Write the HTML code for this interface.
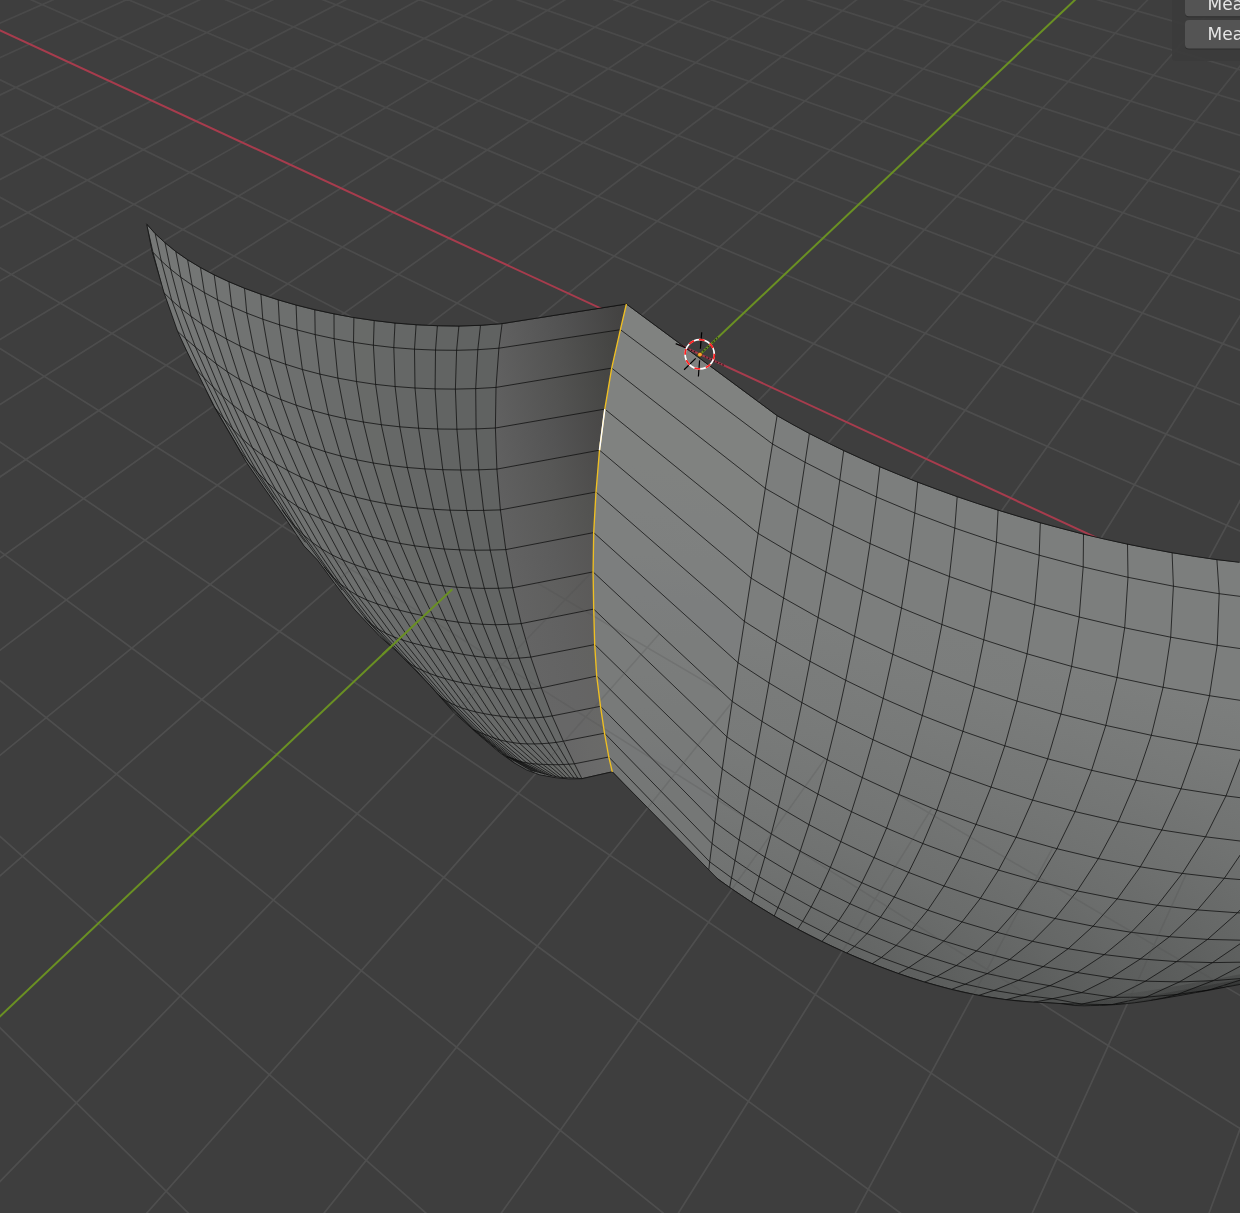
<!DOCTYPE html><html><head><meta charset="utf-8"><title>Blender viewport</title><style>html,body{margin:0;padding:0;background:#3e3e3e;}body{width:1240px;height:1213px;overflow:hidden;position:relative;font-family:"DejaVu Sans","Liberation Sans",sans-serif}svg{display:block}</style></head><body><svg width="1240" height="1213" viewBox="0 0 1240 1213">
<defs><linearGradient id="fade" x1="0" y1="0" x2="0" y2="1"><stop offset="0" stop-color="#3e3e3e" stop-opacity="0.3"/><stop offset="0.45" stop-color="#3e3e3e" stop-opacity="0"/></linearGradient><clipPath id="cl"><polygon points="146.4,223.7 155.1,233.5 165,242.7 175.8,251.5 187.6,259.7 200.5,267.5 214.2,274.8 228.9,281.7 244.5,288.2 260.9,294.2 278.2,299.8 296.1,305 314.8,309.7 334,313.8 353.9,317.5 374.2,320.5 395,323 416.1,324.7 437.4,325.7 458.9,326 480.5,325.3 502.1,323.6 626.4,304 620.4,329.7 611.7,368.1 604.8,409.1 599.5,450.2 596,492 593.7,532.6 593.1,571.9 593.7,609.1 594.7,644.6 596.7,676 600.5,706.3 604.5,733.2 608.8,757 612.3,771.8 581.9,778.7 568.7,778.9 555.8,777.7 539.7,774.8 526.8,770 513.9,762.7 499.4,752.3 478.4,734.5 454.2,712.7 430,685.5 412.3,667.1 396.1,651 380,636.5 355,610 335,583.8 317.5,560 304.1,546 283.1,514.8 263.7,487.3 245.9,461.5 228.2,430.8 213.6,405.7 199.9,377.5 186.2,350 177.5,331 163.9,292.2 152.1,251.3 146.8,224.7"/></clipPath><clipPath id="cr"><polygon points="626.4,304 777.1,415.6 793,424.7 809.4,433.5 826.3,442.1 843.7,450.5 861.5,458.7 879.8,466.7 898.5,474.5 917.7,482.1 937.2,489.4 957.2,496.6 977.4,503.5 998.1,510.1 1019,516.5 1040.3,522.7 1061.8,528.5 1083.5,534.1 1105.4,539.3 1127.5,544.1 1149.7,548.6 1172.1,552.7 1194.5,556.4 1216.9,559.6 1239.2,562.3 1262,562.3 1262,982.2 1252.5,982.2 1239.1,984.6 1228.9,986.5 1215.7,989 1205.7,990.9 1195.7,992.6 1182.8,995 1173,996.7 1163.2,998.4 1153.6,1000 1143.9,1001.5 1134.3,1002.8 1124.8,1003.8 1115.3,1004.6 1108.8,1005 1099.5,1005.4 1090.3,1005.6 1084.1,1005.8 1075.1,1005.5 1073.8,1005.3 1060,1003.5 1046.2,1002.7 1032.4,1002.1 1018.6,1001 1004.8,999.5 991.1,997.5 977.4,995.1 963.7,992.3 950.2,989.1 936.7,985.5 923.3,981.7 910,977.5 896.9,973 883.8,968.2 870.9,963.2 858.1,958 845.5,952.5 833,946.8 820.7,940.9 808.5,934.8 796.5,928.5 784.7,922 773.1,915.3 761.7,908.4 750.4,901.4 739.4,894.1 728.6,886.7 717.9,879.1 612.3,771.8 608.8,757 604.5,733.2 600.5,706.3 596.7,676 594.7,644.6 593.7,609.1 593.1,571.9 593.7,532.6 596,492 599.5,450.2 604.8,409.1 611.7,368.1 620.4,329.7"/></clipPath><linearGradient id="bl0" gradientUnits="userSpaceOnUse" x1="500.5" y1="335.9" x2="623.4" y2="316.9"><stop offset="0" stop-color="#606060"/><stop offset="0.55" stop-color="#515151"/><stop offset="1" stop-color="#434241"/></linearGradient><linearGradient id="bl1" gradientUnits="userSpaceOnUse" x1="497.5" y1="367.8" x2="616" y2="348.9"><stop offset="0" stop-color="#606060"/><stop offset="0.55" stop-color="#525251"/><stop offset="1" stop-color="#444442"/></linearGradient><linearGradient id="bl2" gradientUnits="userSpaceOnUse" x1="495.7" y1="407.7" x2="608.2" y2="388.6"><stop offset="0" stop-color="#606060"/><stop offset="0.55" stop-color="#535352"/><stop offset="1" stop-color="#464644"/></linearGradient><linearGradient id="bl3" gradientUnits="userSpaceOnUse" x1="496.1" y1="448.6" x2="602.1" y2="429.6"><stop offset="0" stop-color="#606060"/><stop offset="0.55" stop-color="#545454"/><stop offset="1" stop-color="#494847"/></linearGradient><linearGradient id="bl4" gradientUnits="userSpaceOnUse" x1="498.6" y1="489.5" x2="597.8" y2="471.1"><stop offset="0" stop-color="#606060"/><stop offset="0.55" stop-color="#575756"/><stop offset="1" stop-color="#4d4c4b"/></linearGradient><linearGradient id="bl5" gradientUnits="userSpaceOnUse" x1="503.1" y1="529.7" x2="594.9" y2="512.3"><stop offset="0" stop-color="#616161"/><stop offset="0.55" stop-color="#5a5a59"/><stop offset="1" stop-color="#525250"/></linearGradient><linearGradient id="bl6" gradientUnits="userSpaceOnUse" x1="509.3" y1="568.6" x2="593.4" y2="552.2"><stop offset="0" stop-color="#626262"/><stop offset="0.55" stop-color="#5c5c5c"/><stop offset="1" stop-color="#575655"/></linearGradient><linearGradient id="bl7" gradientUnits="userSpaceOnUse" x1="517" y1="605.6" x2="593.4" y2="590.5"><stop offset="0" stop-color="#636363"/><stop offset="0.55" stop-color="#5f5f5e"/><stop offset="1" stop-color="#5b5a59"/></linearGradient><linearGradient id="bl8" gradientUnits="userSpaceOnUse" x1="526" y1="640.3" x2="594.2" y2="626.9"><stop offset="0" stop-color="#646464"/><stop offset="0.55" stop-color="#616161"/><stop offset="1" stop-color="#5f5e5d"/></linearGradient><linearGradient id="bl9" gradientUnits="userSpaceOnUse" x1="536" y1="672.5" x2="595.7" y2="660.3"><stop offset="0" stop-color="#656565"/><stop offset="0.55" stop-color="#636363"/><stop offset="1" stop-color="#626260"/></linearGradient><linearGradient id="bl10" gradientUnits="userSpaceOnUse" x1="546.8" y1="701.9" x2="598.6" y2="691.1"><stop offset="0" stop-color="#666666"/><stop offset="0.55" stop-color="#656565"/><stop offset="1" stop-color="#656463"/></linearGradient><linearGradient id="bl11" gradientUnits="userSpaceOnUse" x1="557.8" y1="728.5" x2="602.5" y2="719.8"><stop offset="0" stop-color="#676767"/><stop offset="0.55" stop-color="#676767"/><stop offset="1" stop-color="#686866"/></linearGradient><linearGradient id="bl12" gradientUnits="userSpaceOnUse" x1="568.9" y1="752.5" x2="606.6" y2="745.1"><stop offset="0" stop-color="#676767"/><stop offset="0.55" stop-color="#696968"/><stop offset="1" stop-color="#6a6a68"/></linearGradient><linearGradient id="bl13" gradientUnits="userSpaceOnUse" x1="578.1" y1="771.3" x2="610.5" y2="764.4"><stop offset="0" stop-color="#686868"/><stop offset="0.55" stop-color="#6a6a6a"/><stop offset="1" stop-color="#6c6c6a"/></linearGradient><linearGradient id="b0" gradientUnits="userSpaceOnUse" x1="701.8" y1="359.8" x2="696.4" y2="386.8"><stop offset="0" stop-color="#808280"/><stop offset="1" stop-color="#808280"/></linearGradient><linearGradient id="b1" gradientUnits="userSpaceOnUse" x1="696.4" y1="386.8" x2="688.5" y2="428.2"><stop offset="0" stop-color="#808280"/><stop offset="1" stop-color="#808280"/></linearGradient><linearGradient id="b2" gradientUnits="userSpaceOnUse" x1="688.5" y1="428.2" x2="681.4" y2="471.3"><stop offset="0" stop-color="#808280"/><stop offset="1" stop-color="#808280"/></linearGradient><linearGradient id="b3" gradientUnits="userSpaceOnUse" x1="681.4" y1="471.3" x2="675.3" y2="514.1"><stop offset="0" stop-color="#808280"/><stop offset="1" stop-color="#7f8180"/></linearGradient><linearGradient id="b4" gradientUnits="userSpaceOnUse" x1="675.3" y1="514.1" x2="670.2" y2="556.7"><stop offset="0" stop-color="#7f8180"/><stop offset="1" stop-color="#7e807f"/></linearGradient><linearGradient id="b5" gradientUnits="userSpaceOnUse" x1="670.2" y1="556.7" x2="665.9" y2="597.7"><stop offset="0" stop-color="#7e807f"/><stop offset="1" stop-color="#7c7e7e"/></linearGradient><linearGradient id="b6" gradientUnits="userSpaceOnUse" x1="665.9" y1="597.7" x2="662.7" y2="636.6"><stop offset="0" stop-color="#7c7e7e"/><stop offset="1" stop-color="#7b7d7c"/></linearGradient><linearGradient id="b7" gradientUnits="userSpaceOnUse" x1="662.7" y1="636.6" x2="660.3" y2="673"><stop offset="0" stop-color="#7b7d7c"/><stop offset="1" stop-color="#7a7c7b"/></linearGradient><linearGradient id="b8" gradientUnits="userSpaceOnUse" x1="660.3" y1="673" x2="658.5" y2="706.7"><stop offset="0" stop-color="#7a7c7b"/><stop offset="1" stop-color="#797b7a"/></linearGradient><linearGradient id="b9" gradientUnits="userSpaceOnUse" x1="658.5" y1="706.7" x2="657.5" y2="736.7"><stop offset="0" stop-color="#797b7a"/><stop offset="1" stop-color="#787a79"/></linearGradient><linearGradient id="b10" gradientUnits="userSpaceOnUse" x1="657.5" y1="736.7" x2="657.7" y2="764.2"><stop offset="0" stop-color="#787a79"/><stop offset="1" stop-color="#767878"/></linearGradient><linearGradient id="b11" gradientUnits="userSpaceOnUse" x1="657.7" y1="764.2" x2="658.2" y2="788.4"><stop offset="0" stop-color="#767878"/><stop offset="1" stop-color="#757776"/></linearGradient><linearGradient id="b12" gradientUnits="userSpaceOnUse" x1="658.2" y1="788.4" x2="659.3" y2="809.4"><stop offset="0" stop-color="#757776"/><stop offset="1" stop-color="#747675"/></linearGradient><linearGradient id="b13" gradientUnits="userSpaceOnUse" x1="659.3" y1="809.4" x2="660.4" y2="821.9"><stop offset="0" stop-color="#747675"/><stop offset="1" stop-color="#737574"/></linearGradient><linearGradient id="r14" gradientUnits="userSpaceOnUse" x1="793.3" y1="424.5" x2="788.8" y2="453.1"><stop offset="0" stop-color="#7c7e7d"/><stop offset="1" stop-color="#7c7e7d"/></linearGradient><linearGradient id="r15" gradientUnits="userSpaceOnUse" x1="826.6" y1="442" x2="822.5" y2="471.1"><stop offset="0" stop-color="#7c7e7d"/><stop offset="1" stop-color="#7c7e7d"/></linearGradient><linearGradient id="r16" gradientUnits="userSpaceOnUse" x1="861.8" y1="458.6" x2="858.1" y2="488.4"><stop offset="0" stop-color="#7c7e7d"/><stop offset="1" stop-color="#7c7e7d"/></linearGradient><linearGradient id="r17" gradientUnits="userSpaceOnUse" x1="898.7" y1="474.4" x2="895.6" y2="504.9"><stop offset="0" stop-color="#7c7e7d"/><stop offset="1" stop-color="#7c7e7d"/></linearGradient><linearGradient id="r18" gradientUnits="userSpaceOnUse" x1="937.4" y1="489.3" x2="934.8" y2="520.5"><stop offset="0" stop-color="#7c7e7d"/><stop offset="1" stop-color="#7c7e7d"/></linearGradient><linearGradient id="r19" gradientUnits="userSpaceOnUse" x1="977.6" y1="503.4" x2="975.6" y2="535.1"><stop offset="0" stop-color="#7c7e7d"/><stop offset="1" stop-color="#7c7e7d"/></linearGradient><linearGradient id="r20" gradientUnits="userSpaceOnUse" x1="1019.2" y1="516.4" x2="1017.8" y2="548.7"><stop offset="0" stop-color="#7c7e7d"/><stop offset="1" stop-color="#7c7e7d"/></linearGradient><linearGradient id="r21" gradientUnits="userSpaceOnUse" x1="1061.9" y1="528.4" x2="1061.2" y2="561"><stop offset="0" stop-color="#7c7e7d"/><stop offset="1" stop-color="#7c7e7d"/></linearGradient><linearGradient id="r22" gradientUnits="userSpaceOnUse" x1="1105.5" y1="539.1" x2="1105.6" y2="572.1"><stop offset="0" stop-color="#7c7e7d"/><stop offset="1" stop-color="#7c7e7d"/></linearGradient><linearGradient id="r23" gradientUnits="userSpaceOnUse" x1="1149.8" y1="548.4" x2="1150.7" y2="581.8"><stop offset="0" stop-color="#7c7e7d"/><stop offset="1" stop-color="#7c7e7d"/></linearGradient><linearGradient id="r24" gradientUnits="userSpaceOnUse" x1="1194.5" y1="556.1" x2="1196.3" y2="589.9"><stop offset="0" stop-color="#7c7e7d"/><stop offset="1" stop-color="#7c7e7d"/></linearGradient><linearGradient id="r25" gradientUnits="userSpaceOnUse" x1="1239.2" y1="562" x2="1242" y2="596.6"><stop offset="0" stop-color="#7c7e7d"/><stop offset="1" stop-color="#7c7e7d"/></linearGradient><linearGradient id="r26" gradientUnits="userSpaceOnUse" x1="788.8" y1="453.1" x2="781.8" y2="497.8"><stop offset="0" stop-color="#7c7e7d"/><stop offset="1" stop-color="#7c7e7d"/></linearGradient><linearGradient id="r27" gradientUnits="userSpaceOnUse" x1="822.5" y1="471.1" x2="815.7" y2="516.5"><stop offset="0" stop-color="#7c7e7d"/><stop offset="1" stop-color="#7c7e7d"/></linearGradient><linearGradient id="r28" gradientUnits="userSpaceOnUse" x1="858.1" y1="488.4" x2="851.7" y2="534.7"><stop offset="0" stop-color="#7c7e7d"/><stop offset="1" stop-color="#7c7e7d"/></linearGradient><linearGradient id="r29" gradientUnits="userSpaceOnUse" x1="895.6" y1="504.9" x2="889.5" y2="552.1"><stop offset="0" stop-color="#7c7e7d"/><stop offset="1" stop-color="#7c7e7d"/></linearGradient><linearGradient id="r30" gradientUnits="userSpaceOnUse" x1="934.8" y1="520.5" x2="929.1" y2="568.5"><stop offset="0" stop-color="#7c7e7d"/><stop offset="1" stop-color="#7c7e7d"/></linearGradient><linearGradient id="r31" gradientUnits="userSpaceOnUse" x1="975.6" y1="535.1" x2="970.4" y2="583.9"><stop offset="0" stop-color="#7c7e7d"/><stop offset="1" stop-color="#7c7e7d"/></linearGradient><linearGradient id="r32" gradientUnits="userSpaceOnUse" x1="1017.8" y1="548.7" x2="1013" y2="598"><stop offset="0" stop-color="#7c7e7d"/><stop offset="1" stop-color="#7c7e7d"/></linearGradient><linearGradient id="r33" gradientUnits="userSpaceOnUse" x1="1061.2" y1="561" x2="1057" y2="610.9"><stop offset="0" stop-color="#7c7e7d"/><stop offset="1" stop-color="#7c7e7d"/></linearGradient><linearGradient id="r34" gradientUnits="userSpaceOnUse" x1="1105.6" y1="572.1" x2="1102" y2="622.4"><stop offset="0" stop-color="#7c7e7d"/><stop offset="1" stop-color="#7c7e7d"/></linearGradient><linearGradient id="r35" gradientUnits="userSpaceOnUse" x1="1150.7" y1="581.8" x2="1147.7" y2="632.5"><stop offset="0" stop-color="#7c7e7d"/><stop offset="1" stop-color="#7c7e7d"/></linearGradient><linearGradient id="r36" gradientUnits="userSpaceOnUse" x1="1196.3" y1="589.9" x2="1194" y2="641.2"><stop offset="0" stop-color="#7c7e7d"/><stop offset="1" stop-color="#7c7e7d"/></linearGradient><linearGradient id="r37" gradientUnits="userSpaceOnUse" x1="1242" y1="596.6" x2="1240.4" y2="648.6"><stop offset="0" stop-color="#7c7e7d"/><stop offset="1" stop-color="#7c7e7d"/></linearGradient><linearGradient id="r38" gradientUnits="userSpaceOnUse" x1="781.8" y1="497.8" x2="774.5" y2="543.2"><stop offset="0" stop-color="#7c7e7d"/><stop offset="1" stop-color="#7c7e7d"/></linearGradient><linearGradient id="r39" gradientUnits="userSpaceOnUse" x1="815.7" y1="516.5" x2="808.4" y2="562.5"><stop offset="0" stop-color="#7c7e7d"/><stop offset="1" stop-color="#7c7e7d"/></linearGradient><linearGradient id="r40" gradientUnits="userSpaceOnUse" x1="851.7" y1="534.7" x2="844.3" y2="581.2"><stop offset="0" stop-color="#7c7e7d"/><stop offset="1" stop-color="#7c7e7d"/></linearGradient><linearGradient id="r41" gradientUnits="userSpaceOnUse" x1="889.5" y1="552.1" x2="882.1" y2="599.2"><stop offset="0" stop-color="#7c7e7d"/><stop offset="1" stop-color="#7c7e7d"/></linearGradient><linearGradient id="r42" gradientUnits="userSpaceOnUse" x1="929.1" y1="568.5" x2="921.7" y2="616.3"><stop offset="0" stop-color="#7c7e7d"/><stop offset="1" stop-color="#7c7e7d"/></linearGradient><linearGradient id="r43" gradientUnits="userSpaceOnUse" x1="970.4" y1="583.9" x2="962.8" y2="632.2"><stop offset="0" stop-color="#7c7e7d"/><stop offset="1" stop-color="#7c7e7d"/></linearGradient><linearGradient id="r44" gradientUnits="userSpaceOnUse" x1="1013" y1="598" x2="1005.5" y2="646.8"><stop offset="0" stop-color="#7c7e7d"/><stop offset="1" stop-color="#7c7e7d"/></linearGradient><linearGradient id="r45" gradientUnits="userSpaceOnUse" x1="1057" y1="610.9" x2="1049.4" y2="660.1"><stop offset="0" stop-color="#7c7e7d"/><stop offset="1" stop-color="#7c7e7d"/></linearGradient><linearGradient id="r46" gradientUnits="userSpaceOnUse" x1="1102" y1="622.4" x2="1094.3" y2="672"><stop offset="0" stop-color="#7c7e7d"/><stop offset="1" stop-color="#7c7e7d"/></linearGradient><linearGradient id="r47" gradientUnits="userSpaceOnUse" x1="1147.7" y1="632.5" x2="1140" y2="682.4"><stop offset="0" stop-color="#7c7e7d"/><stop offset="1" stop-color="#7c7e7d"/></linearGradient><linearGradient id="r48" gradientUnits="userSpaceOnUse" x1="1194" y1="641.2" x2="1186.3" y2="691.5"><stop offset="0" stop-color="#7c7e7d"/><stop offset="1" stop-color="#7c7e7d"/></linearGradient><linearGradient id="r49" gradientUnits="userSpaceOnUse" x1="1240.4" y1="648.6" x2="1232.8" y2="699.2"><stop offset="0" stop-color="#7c7e7d"/><stop offset="1" stop-color="#7c7e7d"/></linearGradient><linearGradient id="r50" gradientUnits="userSpaceOnUse" x1="774.5" y1="543.2" x2="767.3" y2="588"><stop offset="0" stop-color="#7c7e7d"/><stop offset="1" stop-color="#7c7e7d"/></linearGradient><linearGradient id="r51" gradientUnits="userSpaceOnUse" x1="808.4" y1="562.5" x2="800.8" y2="607.7"><stop offset="0" stop-color="#7c7e7d"/><stop offset="1" stop-color="#7c7e7d"/></linearGradient><linearGradient id="r52" gradientUnits="userSpaceOnUse" x1="844.3" y1="581.2" x2="836.3" y2="626.9"><stop offset="0" stop-color="#7c7e7d"/><stop offset="1" stop-color="#7c7e7d"/></linearGradient><linearGradient id="r53" gradientUnits="userSpaceOnUse" x1="882.1" y1="599.2" x2="873.7" y2="645.3"><stop offset="0" stop-color="#7c7e7d"/><stop offset="1" stop-color="#7c7e7d"/></linearGradient><linearGradient id="r54" gradientUnits="userSpaceOnUse" x1="921.7" y1="616.3" x2="912.8" y2="662.7"><stop offset="0" stop-color="#7c7e7d"/><stop offset="1" stop-color="#7b7d7c"/></linearGradient><linearGradient id="r55" gradientUnits="userSpaceOnUse" x1="962.8" y1="632.2" x2="953.5" y2="679"><stop offset="0" stop-color="#7c7e7d"/><stop offset="1" stop-color="#7b7d7c"/></linearGradient><linearGradient id="r56" gradientUnits="userSpaceOnUse" x1="1005.5" y1="646.8" x2="995.6" y2="693.9"><stop offset="0" stop-color="#7c7e7d"/><stop offset="1" stop-color="#7b7d7c"/></linearGradient><linearGradient id="r57" gradientUnits="userSpaceOnUse" x1="1049.4" y1="660.1" x2="1038.9" y2="707.5"><stop offset="0" stop-color="#7c7e7d"/><stop offset="1" stop-color="#7a7c7b"/></linearGradient><linearGradient id="r58" gradientUnits="userSpaceOnUse" x1="1094.3" y1="672" x2="1083.3" y2="719.7"><stop offset="0" stop-color="#7c7e7d"/><stop offset="1" stop-color="#7a7c7b"/></linearGradient><linearGradient id="r59" gradientUnits="userSpaceOnUse" x1="1140" y1="682.4" x2="1128.5" y2="730.3"><stop offset="0" stop-color="#7c7e7d"/><stop offset="1" stop-color="#797b7a"/></linearGradient><linearGradient id="r60" gradientUnits="userSpaceOnUse" x1="1186.3" y1="691.5" x2="1174.2" y2="739.5"><stop offset="0" stop-color="#7c7e7d"/><stop offset="1" stop-color="#797b7a"/></linearGradient><linearGradient id="r61" gradientUnits="userSpaceOnUse" x1="1232.8" y1="699.2" x2="1220.2" y2="747.4"><stop offset="0" stop-color="#7c7e7d"/><stop offset="1" stop-color="#797b7a"/></linearGradient><linearGradient id="r62" gradientUnits="userSpaceOnUse" x1="1279.2" y1="705.7" x2="1266.1" y2="754"><stop offset="0" stop-color="#7c7e7d"/><stop offset="1" stop-color="#787a79"/></linearGradient><linearGradient id="r63" gradientUnits="userSpaceOnUse" x1="767.3" y1="588" x2="760.3" y2="631.5"><stop offset="0" stop-color="#7c7e7d"/><stop offset="1" stop-color="#7c7e7d"/></linearGradient><linearGradient id="r64" gradientUnits="userSpaceOnUse" x1="800.8" y1="607.7" x2="793.1" y2="651.4"><stop offset="0" stop-color="#7c7e7d"/><stop offset="1" stop-color="#7b7d7c"/></linearGradient><linearGradient id="r65" gradientUnits="userSpaceOnUse" x1="836.3" y1="626.9" x2="827.9" y2="670.8"><stop offset="0" stop-color="#7c7e7d"/><stop offset="1" stop-color="#7a7c7b"/></linearGradient><linearGradient id="r66" gradientUnits="userSpaceOnUse" x1="873.7" y1="645.3" x2="864.5" y2="689.4"><stop offset="0" stop-color="#7c7e7d"/><stop offset="1" stop-color="#7a7c7b"/></linearGradient><linearGradient id="r67" gradientUnits="userSpaceOnUse" x1="912.8" y1="662.7" x2="902.8" y2="707"><stop offset="0" stop-color="#7b7d7c"/><stop offset="1" stop-color="#797b7a"/></linearGradient><linearGradient id="r68" gradientUnits="userSpaceOnUse" x1="953.5" y1="679" x2="942.6" y2="723.4"><stop offset="0" stop-color="#7b7d7c"/><stop offset="1" stop-color="#797b7a"/></linearGradient><linearGradient id="r69" gradientUnits="userSpaceOnUse" x1="995.6" y1="693.9" x2="983.8" y2="738.5"><stop offset="0" stop-color="#7b7d7c"/><stop offset="1" stop-color="#787a79"/></linearGradient><linearGradient id="r70" gradientUnits="userSpaceOnUse" x1="1038.9" y1="707.5" x2="1026.3" y2="752.3"><stop offset="0" stop-color="#7a7c7b"/><stop offset="1" stop-color="#777978"/></linearGradient><linearGradient id="r71" gradientUnits="userSpaceOnUse" x1="1083.3" y1="719.7" x2="1069.7" y2="764.5"><stop offset="0" stop-color="#7a7c7b"/><stop offset="1" stop-color="#777978"/></linearGradient><linearGradient id="r72" gradientUnits="userSpaceOnUse" x1="1128.5" y1="730.3" x2="1113.8" y2="775.3"><stop offset="0" stop-color="#797b7a"/><stop offset="1" stop-color="#767877"/></linearGradient><linearGradient id="r73" gradientUnits="userSpaceOnUse" x1="1174.2" y1="739.5" x2="1158.5" y2="784.6"><stop offset="0" stop-color="#797b7a"/><stop offset="1" stop-color="#767877"/></linearGradient><linearGradient id="r74" gradientUnits="userSpaceOnUse" x1="1220.2" y1="747.4" x2="1203.5" y2="792.3"><stop offset="0" stop-color="#797b7a"/><stop offset="1" stop-color="#757776"/></linearGradient><linearGradient id="r75" gradientUnits="userSpaceOnUse" x1="1266.1" y1="754" x2="1248.4" y2="798.7"><stop offset="0" stop-color="#787a79"/><stop offset="1" stop-color="#747675"/></linearGradient><linearGradient id="r76" gradientUnits="userSpaceOnUse" x1="760.3" y1="631.5" x2="753.5" y2="672.8"><stop offset="0" stop-color="#7c7e7d"/><stop offset="1" stop-color="#7a7c7b"/></linearGradient><linearGradient id="r77" gradientUnits="userSpaceOnUse" x1="793.1" y1="651.4" x2="785.4" y2="692.8"><stop offset="0" stop-color="#7b7d7c"/><stop offset="1" stop-color="#797b7a"/></linearGradient><linearGradient id="r78" gradientUnits="userSpaceOnUse" x1="827.9" y1="670.8" x2="819.2" y2="712.1"><stop offset="0" stop-color="#7a7c7b"/><stop offset="1" stop-color="#797b7a"/></linearGradient><linearGradient id="r79" gradientUnits="userSpaceOnUse" x1="864.5" y1="689.4" x2="854.8" y2="730.7"><stop offset="0" stop-color="#7a7c7b"/><stop offset="1" stop-color="#787a79"/></linearGradient><linearGradient id="r80" gradientUnits="userSpaceOnUse" x1="902.8" y1="707" x2="892" y2="748.3"><stop offset="0" stop-color="#797b7a"/><stop offset="1" stop-color="#777978"/></linearGradient><linearGradient id="r81" gradientUnits="userSpaceOnUse" x1="942.6" y1="723.4" x2="930.6" y2="764.7"><stop offset="0" stop-color="#797b7a"/><stop offset="1" stop-color="#767877"/></linearGradient><linearGradient id="r82" gradientUnits="userSpaceOnUse" x1="983.8" y1="738.5" x2="970.6" y2="779.8"><stop offset="0" stop-color="#787a79"/><stop offset="1" stop-color="#757776"/></linearGradient><linearGradient id="r83" gradientUnits="userSpaceOnUse" x1="1026.3" y1="752.3" x2="1011.8" y2="793.6"><stop offset="0" stop-color="#777978"/><stop offset="1" stop-color="#757776"/></linearGradient><linearGradient id="r84" gradientUnits="userSpaceOnUse" x1="1069.7" y1="764.5" x2="1053.9" y2="805.8"><stop offset="0" stop-color="#777978"/><stop offset="1" stop-color="#747675"/></linearGradient><linearGradient id="r85" gradientUnits="userSpaceOnUse" x1="1113.8" y1="775.3" x2="1096.7" y2="816.6"><stop offset="0" stop-color="#767877"/><stop offset="1" stop-color="#737574"/></linearGradient><linearGradient id="r86" gradientUnits="userSpaceOnUse" x1="1158.5" y1="784.6" x2="1140" y2="825.8"><stop offset="0" stop-color="#767877"/><stop offset="1" stop-color="#727473"/></linearGradient><linearGradient id="r87" gradientUnits="userSpaceOnUse" x1="1203.5" y1="792.3" x2="1183.6" y2="833.4"><stop offset="0" stop-color="#757776"/><stop offset="1" stop-color="#717372"/></linearGradient><linearGradient id="r88" gradientUnits="userSpaceOnUse" x1="1248.4" y1="798.7" x2="1227.2" y2="839.5"><stop offset="0" stop-color="#747675"/><stop offset="1" stop-color="#717372"/></linearGradient><linearGradient id="r89" gradientUnits="userSpaceOnUse" x1="1293.1" y1="803.8" x2="1270.6" y2="844.1"><stop offset="0" stop-color="#747675"/><stop offset="1" stop-color="#707271"/></linearGradient><linearGradient id="r90" gradientUnits="userSpaceOnUse" x1="753.5" y1="672.8" x2="747.1" y2="711.4"><stop offset="0" stop-color="#7a7c7b"/><stop offset="1" stop-color="#797b7a"/></linearGradient><linearGradient id="r91" gradientUnits="userSpaceOnUse" x1="785.4" y1="692.8" x2="777.9" y2="731.2"><stop offset="0" stop-color="#797b7a"/><stop offset="1" stop-color="#787a79"/></linearGradient><linearGradient id="r92" gradientUnits="userSpaceOnUse" x1="819.2" y1="712.1" x2="810.5" y2="750.3"><stop offset="0" stop-color="#797b7a"/><stop offset="1" stop-color="#777978"/></linearGradient><linearGradient id="r93" gradientUnits="userSpaceOnUse" x1="854.8" y1="730.7" x2="844.8" y2="768.7"><stop offset="0" stop-color="#787a79"/><stop offset="1" stop-color="#767877"/></linearGradient><linearGradient id="r94" gradientUnits="userSpaceOnUse" x1="892" y1="748.3" x2="880.6" y2="786"><stop offset="0" stop-color="#777978"/><stop offset="1" stop-color="#757776"/></linearGradient><linearGradient id="r95" gradientUnits="userSpaceOnUse" x1="930.6" y1="764.7" x2="917.9" y2="802.3"><stop offset="0" stop-color="#767877"/><stop offset="1" stop-color="#747675"/></linearGradient><linearGradient id="r96" gradientUnits="userSpaceOnUse" x1="970.6" y1="779.8" x2="956.4" y2="817.3"><stop offset="0" stop-color="#757776"/><stop offset="1" stop-color="#737574"/></linearGradient><linearGradient id="r97" gradientUnits="userSpaceOnUse" x1="1011.8" y1="793.6" x2="996" y2="830.9"><stop offset="0" stop-color="#757776"/><stop offset="1" stop-color="#727473"/></linearGradient><linearGradient id="r98" gradientUnits="userSpaceOnUse" x1="1053.9" y1="805.8" x2="1036.5" y2="843"><stop offset="0" stop-color="#747675"/><stop offset="1" stop-color="#717372"/></linearGradient><linearGradient id="r99" gradientUnits="userSpaceOnUse" x1="1096.7" y1="816.6" x2="1077.7" y2="853.7"><stop offset="0" stop-color="#737574"/><stop offset="1" stop-color="#707271"/></linearGradient><linearGradient id="r100" gradientUnits="userSpaceOnUse" x1="1140" y1="825.8" x2="1119.4" y2="862.7"><stop offset="0" stop-color="#727473"/><stop offset="1" stop-color="#6f7170"/></linearGradient><linearGradient id="r101" gradientUnits="userSpaceOnUse" x1="1183.6" y1="833.4" x2="1161.3" y2="870.1"><stop offset="0" stop-color="#717372"/><stop offset="1" stop-color="#6e706f"/></linearGradient><linearGradient id="r102" gradientUnits="userSpaceOnUse" x1="1227.2" y1="839.5" x2="1203.3" y2="875.9"><stop offset="0" stop-color="#717372"/><stop offset="1" stop-color="#6d6f6e"/></linearGradient><linearGradient id="r103" gradientUnits="userSpaceOnUse" x1="1270.6" y1="844.1" x2="1245.1" y2="880"><stop offset="0" stop-color="#707271"/><stop offset="1" stop-color="#6c6e6d"/></linearGradient><linearGradient id="r104" gradientUnits="userSpaceOnUse" x1="747.1" y1="711.4" x2="741.2" y2="746.7"><stop offset="0" stop-color="#797b7a"/><stop offset="1" stop-color="#787a79"/></linearGradient><linearGradient id="r105" gradientUnits="userSpaceOnUse" x1="777.9" y1="731.2" x2="770.7" y2="766.1"><stop offset="0" stop-color="#787a79"/><stop offset="1" stop-color="#767877"/></linearGradient><linearGradient id="r106" gradientUnits="userSpaceOnUse" x1="810.5" y1="750.3" x2="801.9" y2="784.9"><stop offset="0" stop-color="#777978"/><stop offset="1" stop-color="#757776"/></linearGradient><linearGradient id="r107" gradientUnits="userSpaceOnUse" x1="844.8" y1="768.7" x2="834.7" y2="802.9"><stop offset="0" stop-color="#767877"/><stop offset="1" stop-color="#747675"/></linearGradient><linearGradient id="r108" gradientUnits="userSpaceOnUse" x1="880.6" y1="786" x2="869" y2="819.9"><stop offset="0" stop-color="#757776"/><stop offset="1" stop-color="#737574"/></linearGradient><linearGradient id="r109" gradientUnits="userSpaceOnUse" x1="917.9" y1="802.3" x2="904.7" y2="835.8"><stop offset="0" stop-color="#747675"/><stop offset="1" stop-color="#727473"/></linearGradient><linearGradient id="r110" gradientUnits="userSpaceOnUse" x1="956.4" y1="817.3" x2="941.5" y2="850.5"><stop offset="0" stop-color="#737574"/><stop offset="1" stop-color="#707271"/></linearGradient><linearGradient id="r111" gradientUnits="userSpaceOnUse" x1="996" y1="830.9" x2="979.3" y2="863.8"><stop offset="0" stop-color="#727473"/><stop offset="1" stop-color="#6f7170"/></linearGradient><linearGradient id="r112" gradientUnits="userSpaceOnUse" x1="1036.5" y1="843" x2="1018" y2="875.7"><stop offset="0" stop-color="#717372"/><stop offset="1" stop-color="#6e706f"/></linearGradient><linearGradient id="r113" gradientUnits="userSpaceOnUse" x1="1077.7" y1="853.7" x2="1057.4" y2="886.1"><stop offset="0" stop-color="#707271"/><stop offset="1" stop-color="#6d6f6e"/></linearGradient><linearGradient id="r114" gradientUnits="userSpaceOnUse" x1="1119.4" y1="862.7" x2="1097.2" y2="894.9"><stop offset="0" stop-color="#6f7170"/><stop offset="1" stop-color="#6c6e6d"/></linearGradient><linearGradient id="r115" gradientUnits="userSpaceOnUse" x1="1161.3" y1="870.1" x2="1137.3" y2="902.1"><stop offset="0" stop-color="#6e706f"/><stop offset="1" stop-color="#6a6c6b"/></linearGradient><linearGradient id="r116" gradientUnits="userSpaceOnUse" x1="1203.3" y1="875.9" x2="1177.5" y2="907.6"><stop offset="0" stop-color="#6d6f6e"/><stop offset="1" stop-color="#696b6a"/></linearGradient><linearGradient id="r117" gradientUnits="userSpaceOnUse" x1="1245.1" y1="880" x2="1217.5" y2="911.3"><stop offset="0" stop-color="#6c6e6d"/><stop offset="1" stop-color="#686a69"/></linearGradient><linearGradient id="r118" gradientUnits="userSpaceOnUse" x1="1286.5" y1="882.5" x2="1257.2" y2="913.4"><stop offset="0" stop-color="#6b6d6c"/><stop offset="1" stop-color="#676968"/></linearGradient><linearGradient id="r119" gradientUnits="userSpaceOnUse" x1="741.2" y1="746.7" x2="735.9" y2="778.5"><stop offset="0" stop-color="#787a79"/><stop offset="1" stop-color="#767877"/></linearGradient><linearGradient id="r120" gradientUnits="userSpaceOnUse" x1="770.7" y1="766.1" x2="763.9" y2="797.4"><stop offset="0" stop-color="#767877"/><stop offset="1" stop-color="#757776"/></linearGradient><linearGradient id="r121" gradientUnits="userSpaceOnUse" x1="801.9" y1="784.9" x2="793.6" y2="815.7"><stop offset="0" stop-color="#757776"/><stop offset="1" stop-color="#737574"/></linearGradient><linearGradient id="r122" gradientUnits="userSpaceOnUse" x1="834.7" y1="802.9" x2="824.8" y2="833.1"><stop offset="0" stop-color="#747675"/><stop offset="1" stop-color="#727473"/></linearGradient><linearGradient id="r123" gradientUnits="userSpaceOnUse" x1="869" y1="819.9" x2="857.5" y2="849.6"><stop offset="0" stop-color="#737574"/><stop offset="1" stop-color="#717372"/></linearGradient><linearGradient id="r124" gradientUnits="userSpaceOnUse" x1="904.7" y1="835.8" x2="891.3" y2="865"><stop offset="0" stop-color="#727473"/><stop offset="1" stop-color="#6f7170"/></linearGradient><linearGradient id="r125" gradientUnits="userSpaceOnUse" x1="941.5" y1="850.5" x2="926.3" y2="879.2"><stop offset="0" stop-color="#707271"/><stop offset="1" stop-color="#6e706f"/></linearGradient><linearGradient id="r126" gradientUnits="userSpaceOnUse" x1="979.3" y1="863.8" x2="962.2" y2="892.2"><stop offset="0" stop-color="#6f7170"/><stop offset="1" stop-color="#6c6e6d"/></linearGradient><linearGradient id="r127" gradientUnits="userSpaceOnUse" x1="1018" y1="875.7" x2="998.9" y2="903.7"><stop offset="0" stop-color="#6e706f"/><stop offset="1" stop-color="#6b6d6c"/></linearGradient><linearGradient id="r128" gradientUnits="userSpaceOnUse" x1="1057.4" y1="886.1" x2="1036.2" y2="913.8"><stop offset="0" stop-color="#6d6f6e"/><stop offset="1" stop-color="#6a6c6b"/></linearGradient><linearGradient id="r129" gradientUnits="userSpaceOnUse" x1="1097.2" y1="894.9" x2="1074" y2="922.3"><stop offset="0" stop-color="#6c6e6d"/><stop offset="1" stop-color="#686a69"/></linearGradient><linearGradient id="r130" gradientUnits="userSpaceOnUse" x1="1137.3" y1="902.1" x2="1112.1" y2="929.3"><stop offset="0" stop-color="#6a6c6b"/><stop offset="1" stop-color="#676968"/></linearGradient><linearGradient id="r131" gradientUnits="userSpaceOnUse" x1="1177.5" y1="907.6" x2="1150.3" y2="934.5"><stop offset="0" stop-color="#696b6a"/><stop offset="1" stop-color="#656766"/></linearGradient><linearGradient id="r132" gradientUnits="userSpaceOnUse" x1="1217.5" y1="911.3" x2="1188.4" y2="938"><stop offset="0" stop-color="#686a69"/><stop offset="1" stop-color="#646665"/></linearGradient><linearGradient id="r133" gradientUnits="userSpaceOnUse" x1="1257.2" y1="913.4" x2="1226.3" y2="939.8"><stop offset="0" stop-color="#676968"/><stop offset="1" stop-color="#636564"/></linearGradient><linearGradient id="r134" gradientUnits="userSpaceOnUse" x1="1296.3" y1="913.6" x2="1263.8" y2="939.9"><stop offset="0" stop-color="#666867"/><stop offset="1" stop-color="#616362"/></linearGradient><linearGradient id="r135" gradientUnits="userSpaceOnUse" x1="735.9" y1="778.5" x2="731.1" y2="806.6"><stop offset="0" stop-color="#767877"/><stop offset="1" stop-color="#757776"/></linearGradient><linearGradient id="r136" gradientUnits="userSpaceOnUse" x1="763.9" y1="797.4" x2="757.7" y2="824.9"><stop offset="0" stop-color="#757776"/><stop offset="1" stop-color="#737574"/></linearGradient><linearGradient id="r137" gradientUnits="userSpaceOnUse" x1="793.6" y1="815.7" x2="785.8" y2="842.5"><stop offset="0" stop-color="#737574"/><stop offset="1" stop-color="#727473"/></linearGradient><linearGradient id="r138" gradientUnits="userSpaceOnUse" x1="824.8" y1="833.1" x2="815.3" y2="859.2"><stop offset="0" stop-color="#727473"/><stop offset="1" stop-color="#707271"/></linearGradient><linearGradient id="r139" gradientUnits="userSpaceOnUse" x1="857.5" y1="849.6" x2="846.1" y2="875.1"><stop offset="0" stop-color="#717372"/><stop offset="1" stop-color="#6e706f"/></linearGradient><linearGradient id="r140" gradientUnits="userSpaceOnUse" x1="891.3" y1="865" x2="878.1" y2="889.9"><stop offset="0" stop-color="#6f7170"/><stop offset="1" stop-color="#6d6f6e"/></linearGradient><linearGradient id="r141" gradientUnits="userSpaceOnUse" x1="926.3" y1="879.2" x2="911" y2="903.5"><stop offset="0" stop-color="#6e706f"/><stop offset="1" stop-color="#6b6d6c"/></linearGradient><linearGradient id="r142" gradientUnits="userSpaceOnUse" x1="962.2" y1="892.2" x2="944.9" y2="916"><stop offset="0" stop-color="#6c6e6d"/><stop offset="1" stop-color="#6a6c6b"/></linearGradient><linearGradient id="r143" gradientUnits="userSpaceOnUse" x1="998.9" y1="903.7" x2="979.5" y2="927.1"><stop offset="0" stop-color="#6b6d6c"/><stop offset="1" stop-color="#686a69"/></linearGradient><linearGradient id="r144" gradientUnits="userSpaceOnUse" x1="1036.2" y1="913.8" x2="1014.6" y2="936.8"><stop offset="0" stop-color="#6a6c6b"/><stop offset="1" stop-color="#666867"/></linearGradient><linearGradient id="r145" gradientUnits="userSpaceOnUse" x1="1074" y1="922.3" x2="1050.3" y2="945"><stop offset="0" stop-color="#686a69"/><stop offset="1" stop-color="#656766"/></linearGradient><linearGradient id="r146" gradientUnits="userSpaceOnUse" x1="1112.1" y1="929.3" x2="1086.2" y2="951.7"><stop offset="0" stop-color="#676968"/><stop offset="1" stop-color="#636564"/></linearGradient><linearGradient id="r147" gradientUnits="userSpaceOnUse" x1="1150.3" y1="934.5" x2="1122.3" y2="956.7"><stop offset="0" stop-color="#656766"/><stop offset="1" stop-color="#626463"/></linearGradient><linearGradient id="r148" gradientUnits="userSpaceOnUse" x1="1188.4" y1="938" x2="1158.5" y2="960.2"><stop offset="0" stop-color="#646665"/><stop offset="1" stop-color="#606261"/></linearGradient><linearGradient id="r149" gradientUnits="userSpaceOnUse" x1="1226.3" y1="939.8" x2="1194.5" y2="962.1"><stop offset="0" stop-color="#636564"/><stop offset="1" stop-color="#5e605f"/></linearGradient><linearGradient id="r150" gradientUnits="userSpaceOnUse" x1="1263.8" y1="939.9" x2="1230.3" y2="962.4"><stop offset="0" stop-color="#616362"/><stop offset="1" stop-color="#5d5f5e"/></linearGradient><linearGradient id="r151" gradientUnits="userSpaceOnUse" x1="1300.5" y1="938.2" x2="1265.1" y2="961.6"><stop offset="0" stop-color="#606261"/><stop offset="1" stop-color="#5b5d5c"/></linearGradient><linearGradient id="r152" gradientUnits="userSpaceOnUse" x1="731.1" y1="806.6" x2="727" y2="831.1"><stop offset="0" stop-color="#757776"/><stop offset="1" stop-color="#737574"/></linearGradient><linearGradient id="r153" gradientUnits="userSpaceOnUse" x1="757.7" y1="824.9" x2="752" y2="848.5"><stop offset="0" stop-color="#737574"/><stop offset="1" stop-color="#727473"/></linearGradient><linearGradient id="r154" gradientUnits="userSpaceOnUse" x1="785.8" y1="842.5" x2="778.5" y2="865.3"><stop offset="0" stop-color="#727473"/><stop offset="1" stop-color="#707271"/></linearGradient><linearGradient id="r155" gradientUnits="userSpaceOnUse" x1="815.3" y1="859.2" x2="806.3" y2="881.3"><stop offset="0" stop-color="#707271"/><stop offset="1" stop-color="#6e706f"/></linearGradient><linearGradient id="r156" gradientUnits="userSpaceOnUse" x1="846.1" y1="875.1" x2="835.2" y2="896.4"><stop offset="0" stop-color="#6e706f"/><stop offset="1" stop-color="#6c6e6d"/></linearGradient><linearGradient id="r157" gradientUnits="userSpaceOnUse" x1="878.1" y1="889.9" x2="865.2" y2="910.5"><stop offset="0" stop-color="#6d6f6e"/><stop offset="1" stop-color="#6a6c6b"/></linearGradient><linearGradient id="r158" gradientUnits="userSpaceOnUse" x1="911" y1="903.5" x2="896" y2="923.5"><stop offset="0" stop-color="#6b6d6c"/><stop offset="1" stop-color="#696b6a"/></linearGradient><linearGradient id="r159" gradientUnits="userSpaceOnUse" x1="944.9" y1="916" x2="927.7" y2="935.4"><stop offset="0" stop-color="#6a6c6b"/><stop offset="1" stop-color="#676968"/></linearGradient><linearGradient id="r160" gradientUnits="userSpaceOnUse" x1="979.5" y1="927.1" x2="960.1" y2="945.9"><stop offset="0" stop-color="#686a69"/><stop offset="1" stop-color="#656766"/></linearGradient><linearGradient id="r161" gradientUnits="userSpaceOnUse" x1="1014.6" y1="936.8" x2="993.1" y2="955.2"><stop offset="0" stop-color="#666867"/><stop offset="1" stop-color="#636564"/></linearGradient><linearGradient id="r162" gradientUnits="userSpaceOnUse" x1="1050.3" y1="945" x2="1026.4" y2="963"><stop offset="0" stop-color="#656766"/><stop offset="1" stop-color="#616362"/></linearGradient><linearGradient id="r163" gradientUnits="userSpaceOnUse" x1="1086.2" y1="951.7" x2="1060.1" y2="969.6"><stop offset="0" stop-color="#636564"/><stop offset="1" stop-color="#606261"/></linearGradient><linearGradient id="r164" gradientUnits="userSpaceOnUse" x1="1122.3" y1="956.7" x2="1094.1" y2="975.2"><stop offset="0" stop-color="#626463"/><stop offset="1" stop-color="#5e605f"/></linearGradient><linearGradient id="r165" gradientUnits="userSpaceOnUse" x1="1158.5" y1="960.2" x2="1128.3" y2="979.5"><stop offset="0" stop-color="#606261"/><stop offset="1" stop-color="#5c5e5d"/></linearGradient><linearGradient id="r166" gradientUnits="userSpaceOnUse" x1="1194.5" y1="962.1" x2="1162.4" y2="981.5"><stop offset="0" stop-color="#5e605f"/><stop offset="1" stop-color="#5a5c5b"/></linearGradient><linearGradient id="r167" gradientUnits="userSpaceOnUse" x1="1230.3" y1="962.4" x2="1196.2" y2="981.3"><stop offset="0" stop-color="#5d5f5e"/><stop offset="1" stop-color="#585a59"/></linearGradient><linearGradient id="r168" gradientUnits="userSpaceOnUse" x1="1265.1" y1="961.6" x2="1229.8" y2="979.4"><stop offset="0" stop-color="#5b5d5c"/><stop offset="1" stop-color="#575958"/></linearGradient><linearGradient id="r169" gradientUnits="userSpaceOnUse" x1="1298.1" y1="959" x2="1262.4" y2="976.8"><stop offset="0" stop-color="#5a5c5b"/><stop offset="1" stop-color="#555756"/></linearGradient><linearGradient id="r170" gradientUnits="userSpaceOnUse" x1="727" y1="831.1" x2="723.5" y2="852"><stop offset="0" stop-color="#737574"/><stop offset="1" stop-color="#727473"/></linearGradient><linearGradient id="r171" gradientUnits="userSpaceOnUse" x1="752" y1="848.5" x2="747.1" y2="868.6"><stop offset="0" stop-color="#727473"/><stop offset="1" stop-color="#707271"/></linearGradient><linearGradient id="r172" gradientUnits="userSpaceOnUse" x1="778.5" y1="865.3" x2="771.9" y2="884.5"><stop offset="0" stop-color="#707271"/><stop offset="1" stop-color="#6e706f"/></linearGradient><linearGradient id="r173" gradientUnits="userSpaceOnUse" x1="806.3" y1="881.3" x2="797.9" y2="899.6"><stop offset="0" stop-color="#6e706f"/><stop offset="1" stop-color="#6c6e6d"/></linearGradient><linearGradient id="r174" gradientUnits="userSpaceOnUse" x1="835.2" y1="896.4" x2="824.9" y2="913.9"><stop offset="0" stop-color="#6c6e6d"/><stop offset="1" stop-color="#6a6c6b"/></linearGradient><linearGradient id="r175" gradientUnits="userSpaceOnUse" x1="865.2" y1="910.5" x2="852.8" y2="927.2"><stop offset="0" stop-color="#6a6c6b"/><stop offset="1" stop-color="#686a69"/></linearGradient><linearGradient id="r176" gradientUnits="userSpaceOnUse" x1="896" y1="923.5" x2="881.6" y2="939.5"><stop offset="0" stop-color="#696b6a"/><stop offset="1" stop-color="#666867"/></linearGradient><linearGradient id="r177" gradientUnits="userSpaceOnUse" x1="927.7" y1="935.4" x2="911" y2="950.7"><stop offset="0" stop-color="#676968"/><stop offset="1" stop-color="#646665"/></linearGradient><linearGradient id="r178" gradientUnits="userSpaceOnUse" x1="960.1" y1="945.9" x2="941.1" y2="960.7"><stop offset="0" stop-color="#656766"/><stop offset="1" stop-color="#626463"/></linearGradient><linearGradient id="r179" gradientUnits="userSpaceOnUse" x1="993.1" y1="955.2" x2="971.8" y2="969.5"><stop offset="0" stop-color="#636564"/><stop offset="1" stop-color="#606261"/></linearGradient><linearGradient id="r180" gradientUnits="userSpaceOnUse" x1="1026.4" y1="963" x2="1002.8" y2="977"><stop offset="0" stop-color="#616362"/><stop offset="1" stop-color="#5e605f"/></linearGradient><linearGradient id="r181" gradientUnits="userSpaceOnUse" x1="1060.1" y1="969.6" x2="1034.2" y2="983"><stop offset="0" stop-color="#606261"/><stop offset="1" stop-color="#5c5e5d"/></linearGradient><linearGradient id="r182" gradientUnits="userSpaceOnUse" x1="1094.1" y1="975.2" x2="1065.8" y2="989.1"><stop offset="0" stop-color="#5e605f"/><stop offset="1" stop-color="#5a5c5b"/></linearGradient><linearGradient id="r183" gradientUnits="userSpaceOnUse" x1="1128.3" y1="979.5" x2="1097.7" y2="994.9"><stop offset="0" stop-color="#5c5e5d"/><stop offset="1" stop-color="#585a59"/></linearGradient><linearGradient id="r184" gradientUnits="userSpaceOnUse" x1="1162.4" y1="981.5" x2="1129.8" y2="997.2"><stop offset="0" stop-color="#5a5c5b"/><stop offset="1" stop-color="#565857"/></linearGradient><linearGradient id="r185" gradientUnits="userSpaceOnUse" x1="1196.2" y1="981.3" x2="1161.7" y2="995.8"><stop offset="0" stop-color="#585a59"/><stop offset="1" stop-color="#535554"/></linearGradient><linearGradient id="r186" gradientUnits="userSpaceOnUse" x1="1229.8" y1="979.4" x2="1193.1" y2="992.2"><stop offset="0" stop-color="#575958"/><stop offset="1" stop-color="#4d4f4e"/></linearGradient><linearGradient id="r187" gradientUnits="userSpaceOnUse" x1="1262.4" y1="976.8" x2="1218.8" y2="988.3"><stop offset="0" stop-color="#555756"/><stop offset="1" stop-color="#484a49"/></linearGradient><linearGradient id="r188" gradientUnits="userSpaceOnUse" x1="1292.1" y1="972.8" x2="1228.9" y2="986.5"><stop offset="0" stop-color="#535554"/><stop offset="1" stop-color="#454746"/></linearGradient><linearGradient id="r189" gradientUnits="userSpaceOnUse" x1="1324.4" y1="963.7" x2="1228.9" y2="986.5"><stop offset="0" stop-color="#515352"/><stop offset="1" stop-color="#454746"/></linearGradient><linearGradient id="r190" gradientUnits="userSpaceOnUse" x1="1358.5" y1="951.9" x2="1228.9" y2="986.5"><stop offset="0" stop-color="#4f5150"/><stop offset="1" stop-color="#454746"/></linearGradient><linearGradient id="r191" gradientUnits="userSpaceOnUse" x1="1389.3" y1="940.8" x2="1228.9" y2="986.5"><stop offset="0" stop-color="#4e504f"/><stop offset="1" stop-color="#454746"/></linearGradient><linearGradient id="r192" gradientUnits="userSpaceOnUse" x1="723.5" y1="852" x2="720.6" y2="869.8"><stop offset="0" stop-color="#727473"/><stop offset="1" stop-color="#717372"/></linearGradient><linearGradient id="r193" gradientUnits="userSpaceOnUse" x1="747.1" y1="868.6" x2="742.9" y2="885.4"><stop offset="0" stop-color="#707271"/><stop offset="1" stop-color="#6f7170"/></linearGradient><linearGradient id="r194" gradientUnits="userSpaceOnUse" x1="771.9" y1="884.5" x2="766.1" y2="900.4"><stop offset="0" stop-color="#6e706f"/><stop offset="1" stop-color="#6c6e6d"/></linearGradient><linearGradient id="r195" gradientUnits="userSpaceOnUse" x1="797.9" y1="899.6" x2="790.3" y2="914.5"><stop offset="0" stop-color="#6c6e6d"/><stop offset="1" stop-color="#6a6c6b"/></linearGradient><linearGradient id="r196" gradientUnits="userSpaceOnUse" x1="824.9" y1="913.9" x2="815.4" y2="927.9"><stop offset="0" stop-color="#6a6c6b"/><stop offset="1" stop-color="#686a69"/></linearGradient><linearGradient id="r197" gradientUnits="userSpaceOnUse" x1="852.8" y1="927.2" x2="841.2" y2="940.4"><stop offset="0" stop-color="#686a69"/><stop offset="1" stop-color="#666867"/></linearGradient><linearGradient id="r198" gradientUnits="userSpaceOnUse" x1="881.6" y1="939.5" x2="867.8" y2="952"><stop offset="0" stop-color="#666867"/><stop offset="1" stop-color="#646665"/></linearGradient><linearGradient id="r199" gradientUnits="userSpaceOnUse" x1="911" y1="950.7" x2="895" y2="962.5"><stop offset="0" stop-color="#646665"/><stop offset="1" stop-color="#616362"/></linearGradient><linearGradient id="r200" gradientUnits="userSpaceOnUse" x1="941.1" y1="960.7" x2="922.8" y2="972"><stop offset="0" stop-color="#626463"/><stop offset="1" stop-color="#5f6160"/></linearGradient><linearGradient id="r201" gradientUnits="userSpaceOnUse" x1="971.8" y1="969.5" x2="951" y2="980.3"><stop offset="0" stop-color="#606261"/><stop offset="1" stop-color="#5d5f5e"/></linearGradient><linearGradient id="r202" gradientUnits="userSpaceOnUse" x1="1002.8" y1="977" x2="979.6" y2="987.3"><stop offset="0" stop-color="#5e605f"/><stop offset="1" stop-color="#5b5d5c"/></linearGradient><linearGradient id="r203" gradientUnits="userSpaceOnUse" x1="1034.2" y1="983" x2="1008.6" y2="992.8"><stop offset="0" stop-color="#5c5e5d"/><stop offset="1" stop-color="#595b5a"/></linearGradient><linearGradient id="r204" gradientUnits="userSpaceOnUse" x1="1065.8" y1="989.1" x2="1037.7" y2="996.9"><stop offset="0" stop-color="#5a5c5b"/><stop offset="1" stop-color="#565857"/></linearGradient><linearGradient id="r205" gradientUnits="userSpaceOnUse" x1="1097.7" y1="994.9" x2="1067" y2="1001.4"><stop offset="0" stop-color="#585a59"/><stop offset="1" stop-color="#525453"/></linearGradient><linearGradient id="r206" gradientUnits="userSpaceOnUse" x1="1129.8" y1="997.2" x2="1096.5" y2="1004.4"><stop offset="0" stop-color="#565857"/><stop offset="1" stop-color="#4c4e4d"/></linearGradient><linearGradient id="r207" gradientUnits="userSpaceOnUse" x1="1161.7" y1="995.8" x2="1118.1" y2="1004.3"><stop offset="0" stop-color="#535554"/><stop offset="1" stop-color="#474948"/></linearGradient><linearGradient id="r208" gradientUnits="userSpaceOnUse" x1="1193.1" y1="992.2" x2="1124.8" y2="1003.8"><stop offset="0" stop-color="#4d4f4e"/><stop offset="1" stop-color="#454746"/></linearGradient><linearGradient id="r209" gradientUnits="userSpaceOnUse" x1="1218.8" y1="988.3" x2="1124.8" y2="1003.8"><stop offset="0" stop-color="#484a49"/><stop offset="1" stop-color="#454746"/></linearGradient><linearGradient id="r210" gradientUnits="userSpaceOnUse" x1="720.6" y1="869.8" x2="719.1" y2="879.8"><stop offset="0" stop-color="#717372"/><stop offset="1" stop-color="#707271"/></linearGradient><linearGradient id="r211" gradientUnits="userSpaceOnUse" x1="742.9" y1="885.4" x2="740.6" y2="894.8"><stop offset="0" stop-color="#6f7170"/><stop offset="1" stop-color="#6e706f"/></linearGradient><linearGradient id="r212" gradientUnits="userSpaceOnUse" x1="766.1" y1="900.4" x2="762.9" y2="909"><stop offset="0" stop-color="#6c6e6d"/><stop offset="1" stop-color="#6b6d6c"/></linearGradient><linearGradient id="r213" gradientUnits="userSpaceOnUse" x1="790.3" y1="914.5" x2="786" y2="922.5"><stop offset="0" stop-color="#6a6c6b"/><stop offset="1" stop-color="#696b6a"/></linearGradient><linearGradient id="r214" gradientUnits="userSpaceOnUse" x1="815.4" y1="927.9" x2="809.8" y2="935.3"><stop offset="0" stop-color="#686a69"/><stop offset="1" stop-color="#676968"/></linearGradient><linearGradient id="r215" gradientUnits="userSpaceOnUse" x1="841.2" y1="940.4" x2="834.3" y2="947.3"><stop offset="0" stop-color="#666867"/><stop offset="1" stop-color="#646665"/></linearGradient><linearGradient id="r216" gradientUnits="userSpaceOnUse" x1="867.8" y1="952" x2="859.5" y2="958.4"><stop offset="0" stop-color="#646665"/><stop offset="1" stop-color="#626463"/></linearGradient><linearGradient id="r217" gradientUnits="userSpaceOnUse" x1="895" y1="962.5" x2="885.2" y2="968.6"><stop offset="0" stop-color="#616362"/><stop offset="1" stop-color="#606261"/></linearGradient><linearGradient id="r218" gradientUnits="userSpaceOnUse" x1="922.8" y1="972" x2="911.4" y2="977.8"><stop offset="0" stop-color="#5f6160"/><stop offset="1" stop-color="#5d5f5e"/></linearGradient><linearGradient id="r219" gradientUnits="userSpaceOnUse" x1="951" y1="980.3" x2="938.1" y2="985.7"><stop offset="0" stop-color="#5d5f5e"/><stop offset="1" stop-color="#5b5d5c"/></linearGradient><linearGradient id="r220" gradientUnits="userSpaceOnUse" x1="979.6" y1="987.3" x2="965.1" y2="992.4"><stop offset="0" stop-color="#5b5d5c"/><stop offset="1" stop-color="#595b5a"/></linearGradient><linearGradient id="r221" gradientUnits="userSpaceOnUse" x1="1008.6" y1="992.8" x2="992.5" y2="997.5"><stop offset="0" stop-color="#595b5a"/><stop offset="1" stop-color="#565857"/></linearGradient><linearGradient id="r222" gradientUnits="userSpaceOnUse" x1="1037.7" y1="996.9" x2="1020" y2="1000.9"><stop offset="0" stop-color="#565857"/><stop offset="1" stop-color="#525453"/></linearGradient><linearGradient id="r223" gradientUnits="userSpaceOnUse" x1="1067" y1="1001.4" x2="1047.6" y2="1002.9"><stop offset="0" stop-color="#525453"/><stop offset="1" stop-color="#4c4e4d"/></linearGradient><linearGradient id="r224" gradientUnits="userSpaceOnUse" x1="1096.5" y1="1004.4" x2="1067.6" y2="1004.5"><stop offset="0" stop-color="#4c4e4d"/><stop offset="1" stop-color="#464847"/></linearGradient><linearGradient id="r225" gradientUnits="userSpaceOnUse" x1="1118.1" y1="1004.3" x2="1073.8" y2="1005.3"><stop offset="0" stop-color="#474948"/><stop offset="1" stop-color="#454746"/></linearGradient><linearGradient id="fg" gradientUnits="userSpaceOnUse" x1="1060" y1="0" x2="1190" y2="0"><stop offset="0" stop-color="#101010" stop-opacity="0"/><stop offset="1" stop-color="#101010" stop-opacity="1"/></linearGradient><clipPath id="cz"><polygon points="281.9,509.9 285.2,514.4 288.6,518.8 292.1,523 295.7,527.1 299.5,531 303.3,534.8 307.3,538.3 311.5,541.7 315.8,545 320.2,548 324.8,550.9 329.6,553.6 334.4,556.1 339.4,558.5 344.6,560.7 349.9,562.8 355.2,564.8 360.7,566.7 366.3,568.6 371.9,570.3 377.5,572 383.1,573.6 388.8,575.2 394.5,576.7 400.3,578.1 406.1,579.5 412,580.8 417.9,581.9 423.9,583 429.9,584 436,584.9 442.2,585.7 448.4,586.4 454.7,587 461,587.5 467.4,587.9 473.8,588.2 480.2,588.4 486.7,588.4 493.2,588.4 499.7,588.3 506.2,588 512.8,587.7 593.1,571.9 593.1,571.9 593.7,609.1 594.7,644.6 596.7,676 600.5,706.3 604.5,733.2 608.8,757 612.3,771.8 581.9,778.7 568.7,778.9 555.8,777.7 539.7,774.8 526.8,770 513.9,762.7 499.4,752.3 478.4,734.5 454.2,712.7 430,685.5 412.3,667.1 396.1,651 380,636.5 355,610 335,583.8 317.5,560 304.1,546 283.1,514.8"/><polygon points="593.1,571.9 732.2,701.4 746.9,711.4 762,721.4 777.7,731.2 793.8,740.9 810.3,750.4 827.2,759.7 844.6,768.8 862.3,777.6 880.5,786.2 898.9,794.5 917.7,802.4 936.9,810.1 956.3,817.4 976,824.4 995.9,831.1 1016.1,837.3 1036.4,843.2 1056.9,848.7 1077.6,853.8 1098.4,858.6 1119.3,862.9 1140.3,866.8 1161.3,870.3 1182.3,873.4 1203.3,876.1 1224.3,878.3 1245.2,880.2 1265.9,881.6 1286.6,882.7 1300,882.7 1300,982.2 1252.5,982.2 1239.1,984.6 1228.9,986.5 1215.7,989 1205.7,990.9 1195.7,992.6 1182.8,995 1173,996.7 1163.2,998.4 1153.6,1000 1143.9,1001.5 1134.3,1002.8 1124.8,1003.8 1115.3,1004.6 1108.8,1005 1099.5,1005.4 1090.3,1005.6 1084.1,1005.8 1075.1,1005.5 1073.8,1005.3 1060,1003.5 1046.2,1002.7 1032.4,1002.1 1018.6,1001 1004.8,999.5 991.1,997.5 977.4,995.1 963.7,992.3 950.2,989.1 936.7,985.5 923.3,981.7 910,977.5 896.9,973 883.8,968.2 870.9,963.2 858.1,958 845.5,952.5 833,946.8 820.7,940.9 808.5,934.8 796.5,928.5 784.7,922 773.1,915.3 761.7,908.4 750.4,901.4 739.4,894.1 728.6,886.7 717.9,879.1 612.3,771.8 608.8,757 604.5,733.2 600.5,706.3 596.7,676 594.7,644.6 593.7,609.1 593.1,571.9"/></clipPath></defs>
<rect width="1240" height="1213" fill="#3e3e3e"/>
<path id="gridp" d="M1401.2 -204.6L1448.7 -195.3M-164.1 -200.5L-206.1 -187.9M1343.3 -201.6L1463.2 -177.5M-98.2 -203.5L-202.5 -171.3M1262.1 -203.2L1453 -164.1M-52.2 -200.4L-221.3 -146.6M1203.4 -200.2L1442.5 -150.1M13.1 -203.4L-217.8 -127.8M1122.3 -201.9L1457.8 -129.8M59.6 -200.2L-214.2 -108M1041.6 -203.5L1446.8 -114.3M124.4 -203.2L-210.3 -87.1M981.7 -200.5L1463.1 -91.8M171.3 -200.1L-206.3 -65M901 -202.2L1451.6 -74.6M235.5 -203.1L-201.9 -41.5M820.7 -203.8L1469 -49.6M299.1 -206.1L-224.5 -6.3M759.7 -200.8L1456.9 -30.3M346.6 -202.9L-220.5 20.9M679.5 -202.5L1444.3 -10.1M409.6 -205.9L-216.1 49.9M599.6 -204.1L1462.9 19.3M457.6 -202.8L-211.5 80.9M537.4 -201.1L1449.7 42.1M520.1 -205.8L-206.5 114.1M457.6 -202.8L1469.7 75.4M568.6 -202.6L-201.2 149.7M378.2 -204.4L1455.7 101.3M630.5 -205.6L-229.4 204.3M314.9 -201.4L1441 128.7M679.5 -202.5L-224.4 247M235.5 -203.1L1462.7 169M740.8 -205.5L-219.1 293.4M171.3 -200.1L1447.1 200.5M790.3 -202.3L-213.3 343.9M92.1 -201.7L1470.7 247.1M851 -205.3L-206.9 399.1M13.1 -203.4L1454.1 283.8M901 -202.2L-243 485.6M-52.2 -200.4L1480.1 338.3M961.2 -205.2L-237.4 555M-131.1 -202L1462.4 381.5M1011.7 -202L-231.2 632M-209.6 -203.7L1443.3 427.9M1071.3 -205L-224.3 718M-202.5 -171.3L1472.2 497.7M1122.3 -201.9L-216.5 814.7M-208.1 -141.1L1451.7 553.6M1181.3 -204.9L-207.6 924M-200.2 -101.9L1484.1 638.4M1232.8 -201.7L-260.6 1103.7M-213 -24.3L1498.9 812M1343.3 -201.6L-245.3 1434.1M-204 29.4L1474.6 897.9M1401.2 -204.6L-83.1 1472.9M-211.5 80.9L1447.7 993.3M1443.7 -188.9L148.6 1432.8M-201.2 149.7L1490.9 1142.6M1441.1 -106.3L317.2 1471.5M-209.5 216.7L1461.1 1267.6M1444.3 -10.1L541.6 1431.5M-219.1 293.4L1512.6 1467.3M1441 128.7L716.6 1470.1M-206.9 399.1L1220.9 1448.6M1445.4 303L933.7 1430.2M-218 505.6L933.7 1430.2M1440.8 583.3L1115 1468.7M-203.2 656.8L716.6 1470.1M1447.7 993.3L1324.9 1428.9M-216.5 814.7L430.4 1451.3M-232.8 1009.5L148.6 1432.8M-214 1306.4L-128.9 1414.6" fill="none" stroke="#585858" stroke-width="1.7" stroke-opacity="0.62"/>
<rect width="1240" height="1213" fill="url(#fade)"/>
<line x1="-8.1" y1="26.7" x2="2246.8" y2="1070" stroke="#a73c4d" stroke-width="2" />
<line x1="1297.7" y1="-210.7" x2="-122.4" y2="1132" stroke="#6a9023" stroke-width="2" />
<g id="leftmesh">
<g clip-path="url(#cl)">
<polygon points="146.4,223.7 155.1,233.5 165,242.7 175.8,251.5 187.6,259.7 200.5,267.5 214.2,274.8 228.9,281.7 244.5,288.2 260.9,294.2 278.2,299.8 296.1,305 314.8,309.7 334,313.8 353.9,317.5 374.2,320.5 395,323 416.1,324.7 437.4,325.7 458.9,326 480.5,325.3 502.1,323.6 626.4,304 620.4,329.7 611.7,368.1 604.8,409.1 599.5,450.2 596,492 593.7,532.6 593.1,571.9 593.7,609.1 594.7,644.6 596.7,676 600.5,706.3 604.5,733.2 608.8,757 612.3,771.8 581.9,778.7 568.7,778.9 555.8,777.7 539.7,774.8 526.8,770 513.9,762.7 499.4,752.3 478.4,734.5 454.2,712.7 430,685.5 412.3,667.1 396.1,651 380,636.5 355,610 335,583.8 317.5,560 304.1,546 283.1,514.8 263.7,487.3 245.9,461.5 228.2,430.8 213.6,405.7 199.9,377.5 186.2,350 177.5,331 163.9,292.2 152.1,251.3 146.8,224.7" fill="#696b6a"/>
<polygon points="146.4,223.7 155.1,233.5 161.3,260.9 153,252.3" fill="#767877" stroke="#767877" stroke-width="0.7"/>
<polygon points="155.1,233.5 165,242.7 170.6,269.2 161.3,260.9" fill="#757776" stroke="#757776" stroke-width="0.7"/>
<polygon points="165,242.7 175.8,251.5 180.8,277.3 170.6,269.2" fill="#757776" stroke="#757776" stroke-width="0.7"/>
<polygon points="175.8,251.5 187.6,259.7 192.1,285.1 180.8,277.3" fill="#747675" stroke="#747675" stroke-width="0.7"/>
<polygon points="187.6,259.7 200.5,267.5 204.4,292.6 192.1,285.1" fill="#747675" stroke="#747675" stroke-width="0.7"/>
<polygon points="200.5,267.5 214.2,274.8 217.6,299.8 204.4,292.6" fill="#737574" stroke="#737574" stroke-width="0.7"/>
<polygon points="214.2,274.8 228.9,281.7 231.8,306.7 217.6,299.8" fill="#727473" stroke="#727473" stroke-width="0.7"/>
<polygon points="228.9,281.7 244.5,288.2 246.8,313.1 231.8,306.7" fill="#717372" stroke="#717372" stroke-width="0.7"/>
<polygon points="244.5,288.2 260.9,294.2 262.8,319.2 246.8,313.1" fill="#707271" stroke="#707271" stroke-width="0.7"/>
<polygon points="260.9,294.2 278.2,299.8 279.5,324.8 262.8,319.2" fill="#6e706f" stroke="#6e706f" stroke-width="0.7"/>
<polygon points="278.2,299.8 296.1,305 297,329.9 279.5,324.8" fill="#6d6f6e" stroke="#6d6f6e" stroke-width="0.7"/>
<polygon points="296.1,305 314.8,309.7 315.2,334.6 297,329.9" fill="#6c6e6d" stroke="#6c6e6d" stroke-width="0.7"/>
<polygon points="314.8,309.7 334,313.8 334.1,338.7 315.2,334.6" fill="#6a6c6b" stroke="#6a6c6b" stroke-width="0.7"/>
<polygon points="334,313.8 353.9,317.5 353.5,342.3 334.1,338.7" fill="#696b6a" stroke="#696b6a" stroke-width="0.7"/>
<polygon points="353.9,317.5 374.2,320.5 373.4,345.2 353.5,342.3" fill="#686a68" stroke="#686a68" stroke-width="0.7"/>
<polygon points="374.2,320.5 395,323 393.8,347.6 373.4,345.2" fill="#666867" stroke="#666867" stroke-width="0.7"/>
<polygon points="395,323 416.1,324.7 414.5,349.2 393.8,347.6" fill="#656766" stroke="#656766" stroke-width="0.7"/>
<polygon points="416.1,324.7 437.4,325.7 435.5,350.1 414.5,349.2" fill="#636564" stroke="#636564" stroke-width="0.7"/>
<polygon points="437.4,325.7 458.9,326 456.6,350.3 435.5,350.1" fill="#626463" stroke="#626463" stroke-width="0.7"/>
<polygon points="458.9,326 480.5,325.3 477.8,349.7 456.6,350.3" fill="#616362" stroke="#616362" stroke-width="0.7"/>
<polygon points="480.5,325.3 502.1,323.6 498.9,348.2 477.8,349.7" fill="#606261" stroke="#606261" stroke-width="0.7"/>
<polygon points="153,252.3 161.3,260.9 171.8,300.4 163.5,292.4" fill="#767877" stroke="#767877" stroke-width="0.7"/>
<polygon points="161.3,260.9 170.6,269.2 181,308.5 171.8,300.4" fill="#757776" stroke="#757776" stroke-width="0.7"/>
<polygon points="170.6,269.2 180.8,277.3 191.1,316.4 181,308.5" fill="#757776" stroke="#757776" stroke-width="0.7"/>
<polygon points="180.8,277.3 192.1,285.1 202.1,324.2 191.1,316.4" fill="#747675" stroke="#747675" stroke-width="0.7"/>
<polygon points="192.1,285.1 204.4,292.6 213.9,331.7 202.1,324.2" fill="#747675" stroke="#747675" stroke-width="0.7"/>
<polygon points="204.4,292.6 217.6,299.8 226.5,339 213.9,331.7" fill="#737574" stroke="#737574" stroke-width="0.7"/>
<polygon points="217.6,299.8 231.8,306.7 240.1,346 226.5,339" fill="#727473" stroke="#727473" stroke-width="0.7"/>
<polygon points="231.8,306.7 246.8,313.1 254.5,352.5 240.1,346" fill="#717372" stroke="#717372" stroke-width="0.7"/>
<polygon points="246.8,313.1 262.8,319.2 269.7,358.7 254.5,352.5" fill="#707271" stroke="#707271" stroke-width="0.7"/>
<polygon points="262.8,319.2 279.5,324.8 285.7,364.3 269.7,358.7" fill="#6e706f" stroke="#6e706f" stroke-width="0.7"/>
<polygon points="279.5,324.8 297,329.9 302.4,369.5 285.7,364.3" fill="#6d6f6e" stroke="#6d6f6e" stroke-width="0.7"/>
<polygon points="297,329.9 315.2,334.6 319.9,374.1 302.4,369.5" fill="#6c6e6d" stroke="#6c6e6d" stroke-width="0.7"/>
<polygon points="315.2,334.6 334.1,338.7 337.9,378.1 319.9,374.1" fill="#6a6c6b" stroke="#6a6c6b" stroke-width="0.7"/>
<polygon points="334.1,338.7 353.5,342.3 356.5,381.5 337.9,378.1" fill="#696b6a" stroke="#696b6a" stroke-width="0.7"/>
<polygon points="353.5,342.3 373.4,345.2 375.6,384.4 356.5,381.5" fill="#686a68" stroke="#686a68" stroke-width="0.7"/>
<polygon points="373.4,345.2 393.8,347.6 395.1,386.5 375.6,384.4" fill="#666867" stroke="#666867" stroke-width="0.7"/>
<polygon points="393.8,347.6 414.5,349.2 415,388 395.1,386.5" fill="#656766" stroke="#656766" stroke-width="0.7"/>
<polygon points="414.5,349.2 435.5,350.1 435.1,388.9 415,388" fill="#636564" stroke="#636564" stroke-width="0.7"/>
<polygon points="435.5,350.1 456.6,350.3 455.4,389.1 435.1,388.9" fill="#626463" stroke="#626463" stroke-width="0.7"/>
<polygon points="456.6,350.3 477.8,349.7 475.7,388.6 455.4,389.1" fill="#616362" stroke="#616362" stroke-width="0.7"/>
<polygon points="477.8,349.7 498.9,348.2 496,387.4 475.7,388.6" fill="#606261" stroke="#606261" stroke-width="0.7"/>
<polygon points="163.5,292.4 171.8,300.4 185.7,338.8 176.5,330.4" fill="#767877" stroke="#767877" stroke-width="0.7"/>
<polygon points="171.8,300.4 181,308.5 195.5,347.2 185.7,338.8" fill="#757776" stroke="#757776" stroke-width="0.7"/>
<polygon points="181,308.5 191.1,316.4 205.7,355.5 195.5,347.2" fill="#757776" stroke="#757776" stroke-width="0.7"/>
<polygon points="191.1,316.4 202.1,324.2 216.2,363.8 205.7,355.5" fill="#747675" stroke="#747675" stroke-width="0.7"/>
<polygon points="202.1,324.2 213.9,331.7 227.5,371.9 216.2,363.8" fill="#747675" stroke="#747675" stroke-width="0.7"/>
<polygon points="213.9,331.7 226.5,339 239.6,379.5 227.5,371.9" fill="#737574" stroke="#737574" stroke-width="0.7"/>
<polygon points="226.5,339 240.1,346 252.7,386.7 239.6,379.5" fill="#727473" stroke="#727473" stroke-width="0.7"/>
<polygon points="240.1,346 254.5,352.5 266.5,393.4 252.7,386.7" fill="#717372" stroke="#717372" stroke-width="0.7"/>
<polygon points="254.5,352.5 269.7,358.7 281,399.6 266.5,393.4" fill="#707271" stroke="#707271" stroke-width="0.7"/>
<polygon points="269.7,358.7 285.7,364.3 296.2,405.2 281,399.6" fill="#6e706f" stroke="#6e706f" stroke-width="0.7"/>
<polygon points="285.7,364.3 302.4,369.5 312.1,410.3 296.2,405.2" fill="#6d6f6e" stroke="#6d6f6e" stroke-width="0.7"/>
<polygon points="302.4,369.5 319.9,374.1 328.6,414.8 312.1,410.3" fill="#6c6e6d" stroke="#6c6e6d" stroke-width="0.7"/>
<polygon points="319.9,374.1 337.9,378.1 345.7,418.7 328.6,414.8" fill="#6a6c6b" stroke="#6a6c6b" stroke-width="0.7"/>
<polygon points="337.9,378.1 356.5,381.5 363.3,422 345.7,418.7" fill="#696b6a" stroke="#696b6a" stroke-width="0.7"/>
<polygon points="356.5,381.5 375.6,384.4 381.3,424.7 363.3,422" fill="#686a68" stroke="#686a68" stroke-width="0.7"/>
<polygon points="375.6,384.4 395.1,386.5 399.8,426.8 381.3,424.7" fill="#666867" stroke="#666867" stroke-width="0.7"/>
<polygon points="395.1,386.5 415,388 418.6,428.2 399.8,426.8" fill="#656766" stroke="#656766" stroke-width="0.7"/>
<polygon points="415,388 435.1,388.9 437.7,429 418.6,428.2" fill="#636564" stroke="#636564" stroke-width="0.7"/>
<polygon points="435.1,388.9 455.4,389.1 456.9,429.2 437.7,429" fill="#626463" stroke="#626463" stroke-width="0.7"/>
<polygon points="455.4,389.1 475.7,388.6 476.1,428.9 456.9,429.2" fill="#616362" stroke="#616362" stroke-width="0.7"/>
<polygon points="475.7,388.6 496,387.4 495.4,428 476.1,428.9" fill="#606261" stroke="#606261" stroke-width="0.7"/>
<polygon points="176.5,330.4 185.7,338.8 203.7,377.5 194.5,367.9" fill="#757776" stroke="#757776" stroke-width="0.7"/>
<polygon points="185.7,338.8 195.5,347.2 213.1,386.9 203.7,377.5" fill="#757776" stroke="#757776" stroke-width="0.7"/>
<polygon points="195.5,347.2 205.7,355.5 222.7,396.2 213.1,386.9" fill="#747675" stroke="#747675" stroke-width="0.7"/>
<polygon points="205.7,355.5 216.2,363.8 233,405.1 222.7,396.2" fill="#747675" stroke="#747675" stroke-width="0.7"/>
<polygon points="216.2,363.8 227.5,371.9 244.2,413.4 233,405.1" fill="#737574" stroke="#737574" stroke-width="0.7"/>
<polygon points="227.5,371.9 239.6,379.5 256.1,421.1 244.2,413.4" fill="#737574" stroke="#737574" stroke-width="0.7"/>
<polygon points="239.6,379.5 252.7,386.7 268.8,428.3 256.1,421.1" fill="#727473" stroke="#727473" stroke-width="0.7"/>
<polygon points="252.7,386.7 266.5,393.4 282.1,435 268.8,428.3" fill="#717372" stroke="#717372" stroke-width="0.7"/>
<polygon points="266.5,393.4 281,399.6 295.9,441.1 282.1,435" fill="#6f7170" stroke="#6f7170" stroke-width="0.7"/>
<polygon points="281,399.6 296.2,405.2 310.3,446.7 295.9,441.1" fill="#6e706f" stroke="#6e706f" stroke-width="0.7"/>
<polygon points="296.2,405.2 312.1,410.3 325.2,451.7 310.3,446.7" fill="#6d6f6e" stroke="#6d6f6e" stroke-width="0.7"/>
<polygon points="312.1,410.3 328.6,414.8 340.7,456 325.2,451.7" fill="#6c6e6d" stroke="#6c6e6d" stroke-width="0.7"/>
<polygon points="328.6,414.8 345.7,418.7 356.7,459.8 340.7,456" fill="#6a6c6b" stroke="#6a6c6b" stroke-width="0.7"/>
<polygon points="345.7,418.7 363.3,422 373.2,463 356.7,459.8" fill="#696b6a" stroke="#696b6a" stroke-width="0.7"/>
<polygon points="363.3,422 381.3,424.7 390.1,465.5 373.2,463" fill="#686a68" stroke="#686a68" stroke-width="0.7"/>
<polygon points="381.3,424.7 399.8,426.8 407.3,467.5 390.1,465.5" fill="#666867" stroke="#666867" stroke-width="0.7"/>
<polygon points="399.8,426.8 418.6,428.2 424.9,468.9 407.3,467.5" fill="#656766" stroke="#656766" stroke-width="0.7"/>
<polygon points="418.6,428.2 437.7,429 442.8,469.7 424.9,468.9" fill="#646665" stroke="#646665" stroke-width="0.7"/>
<polygon points="437.7,429 456.9,429.2 460.7,470 442.8,469.7" fill="#626463" stroke="#626463" stroke-width="0.7"/>
<polygon points="456.9,429.2 476.1,428.9 478.8,469.8 460.7,470" fill="#616362" stroke="#616362" stroke-width="0.7"/>
<polygon points="476.1,428.9 495.4,428 496.9,469.1 478.8,469.8" fill="#606261" stroke="#606261" stroke-width="0.7"/>
<polygon points="194.5,367.9 203.7,377.5 223.9,418.8 215.2,408.2" fill="#747675" stroke="#747675" stroke-width="0.7"/>
<polygon points="203.7,377.5 213.1,386.9 232.8,429.1 223.9,418.8" fill="#747675" stroke="#747675" stroke-width="0.7"/>
<polygon points="213.1,386.9 222.7,396.2 242.3,438.8 232.8,429.1" fill="#737574" stroke="#737574" stroke-width="0.7"/>
<polygon points="222.7,396.2 233,405.1 252.5,447.8 242.3,438.8" fill="#737574" stroke="#737574" stroke-width="0.7"/>
<polygon points="233,405.1 244.2,413.4 263.7,456 252.5,447.8" fill="#727473" stroke="#727473" stroke-width="0.7"/>
<polygon points="244.2,413.4 256.1,421.1 275.5,463.6 263.7,456" fill="#727473" stroke="#727473" stroke-width="0.7"/>
<polygon points="256.1,421.1 268.8,428.3 287.7,470.5 275.5,463.6" fill="#717372" stroke="#717372" stroke-width="0.7"/>
<polygon points="268.8,428.3 282.1,435 300.5,476.9 287.7,470.5" fill="#707271" stroke="#707271" stroke-width="0.7"/>
<polygon points="282.1,435 295.9,441.1 313.6,482.7 300.5,476.9" fill="#6f7170" stroke="#6f7170" stroke-width="0.7"/>
<polygon points="295.9,441.1 310.3,446.7 327.2,488 313.6,482.7" fill="#6e706f" stroke="#6e706f" stroke-width="0.7"/>
<polygon points="310.3,446.7 325.2,451.7 341.1,492.8 327.2,488" fill="#6c6e6d" stroke="#6c6e6d" stroke-width="0.7"/>
<polygon points="325.2,451.7 340.7,456 355.5,497 341.1,492.8" fill="#6b6d6c" stroke="#6b6d6c" stroke-width="0.7"/>
<polygon points="340.7,456 356.7,459.8 370.4,500.6 355.5,497" fill="#6a6c6b" stroke="#6a6c6b" stroke-width="0.7"/>
<polygon points="356.7,459.8 373.2,463 385.6,503.6 370.4,500.6" fill="#696b6a" stroke="#696b6a" stroke-width="0.7"/>
<polygon points="373.2,463 390.1,465.5 401.3,506.1 385.6,503.6" fill="#686a68" stroke="#686a68" stroke-width="0.7"/>
<polygon points="390.1,465.5 407.3,467.5 417.3,508 401.3,506.1" fill="#666867" stroke="#666867" stroke-width="0.7"/>
<polygon points="407.3,467.5 424.9,468.9 433.6,509.3 417.3,508" fill="#656766" stroke="#656766" stroke-width="0.7"/>
<polygon points="424.9,468.9 442.8,469.7 450.1,510.2 433.6,509.3" fill="#646665" stroke="#646665" stroke-width="0.7"/>
<polygon points="442.8,469.7 460.7,470 466.8,510.5 450.1,510.2" fill="#636564" stroke="#636564" stroke-width="0.7"/>
<polygon points="460.7,470 478.8,469.8 483.6,510.4 466.8,510.5" fill="#626463" stroke="#626463" stroke-width="0.7"/>
<polygon points="478.8,469.8 496.9,469.1 500.4,509.9 483.6,510.4" fill="#616362" stroke="#616362" stroke-width="0.7"/>
<polygon points="215.2,408.2 223.9,418.8 248.9,462.4 240.6,451.5" fill="#707271" stroke="#707271" stroke-width="0.7"/>
<polygon points="223.9,418.8 232.8,429.1 257.7,472.5 248.9,462.4" fill="#707271" stroke="#707271" stroke-width="0.7"/>
<polygon points="232.8,429.1 242.3,438.8 266.9,482.1 257.7,472.5" fill="#707271" stroke="#707271" stroke-width="0.7"/>
<polygon points="242.3,438.8 252.5,447.8 276.4,490.9 266.9,482.1" fill="#717372" stroke="#717372" stroke-width="0.7"/>
<polygon points="252.5,447.8 263.7,456 286.5,499.1 276.4,490.9" fill="#717372" stroke="#717372" stroke-width="0.7"/>
<polygon points="263.7,456 275.5,463.6 297.3,506.4 286.5,499.1" fill="#717372" stroke="#717372" stroke-width="0.7"/>
<polygon points="275.5,463.6 287.7,470.5 308.7,513 297.3,506.4" fill="#707271" stroke="#707271" stroke-width="0.7"/>
<polygon points="287.7,470.5 300.5,476.9 320.8,518.8 308.7,513" fill="#6f7170" stroke="#6f7170" stroke-width="0.7"/>
<polygon points="300.5,476.9 313.6,482.7 333.4,524.1 320.8,518.8" fill="#6e706f" stroke="#6e706f" stroke-width="0.7"/>
<polygon points="313.6,482.7 327.2,488 346.2,528.8 333.4,524.1" fill="#6d6f6e" stroke="#6d6f6e" stroke-width="0.7"/>
<polygon points="327.2,488 341.1,492.8 359.2,533.1 346.2,528.8" fill="#6c6e6d" stroke="#6c6e6d" stroke-width="0.7"/>
<polygon points="341.1,492.8 355.5,497 372.5,537.1 359.2,533.1" fill="#6b6d6c" stroke="#6b6d6c" stroke-width="0.7"/>
<polygon points="355.5,497 370.4,500.6 386.2,540.5 372.5,537.1" fill="#6a6c6b" stroke="#6a6c6b" stroke-width="0.7"/>
<polygon points="370.4,500.6 385.6,503.6 400.2,543.4 386.2,540.5" fill="#696b6a" stroke="#696b6a" stroke-width="0.7"/>
<polygon points="385.6,503.6 401.3,506.1 414.5,545.8 400.2,543.4" fill="#686a68" stroke="#686a68" stroke-width="0.7"/>
<polygon points="401.3,506.1 417.3,508 429.2,547.6 414.5,545.8" fill="#666867" stroke="#666867" stroke-width="0.7"/>
<polygon points="417.3,508 433.6,509.3 444.2,549 429.2,547.6" fill="#656766" stroke="#656766" stroke-width="0.7"/>
<polygon points="433.6,509.3 450.1,510.2 459.4,549.8 444.2,549" fill="#646665" stroke="#646665" stroke-width="0.7"/>
<polygon points="450.1,510.2 466.8,510.5 474.7,550.2 459.4,549.8" fill="#636564" stroke="#636564" stroke-width="0.7"/>
<polygon points="466.8,510.5 483.6,510.4 490.2,550.1 474.7,550.2" fill="#626463" stroke="#626463" stroke-width="0.7"/>
<polygon points="483.6,510.4 500.4,509.9 505.8,549.6 490.2,550.1" fill="#616362" stroke="#616362" stroke-width="0.7"/>
<polygon points="240.6,451.5 248.9,462.4 280.2,507.4 273.4,496.8" fill="#6b6d6c" stroke="#6b6d6c" stroke-width="0.7"/>
<polygon points="248.9,462.4 257.7,472.5 287.4,517.2 280.2,507.4" fill="#6c6e6d" stroke="#6c6e6d" stroke-width="0.7"/>
<polygon points="257.7,472.5 266.9,482.1 295,526.3 287.4,517.2" fill="#6d6f6e" stroke="#6d6f6e" stroke-width="0.7"/>
<polygon points="266.9,482.1 276.4,490.9 303.3,534.7 295,526.3" fill="#6e706f" stroke="#6e706f" stroke-width="0.7"/>
<polygon points="276.4,490.9 286.5,499.1 312.2,542.3 303.3,534.7" fill="#6f7170" stroke="#6f7170" stroke-width="0.7"/>
<polygon points="286.5,499.1 297.3,506.4 321.8,549 312.2,542.3" fill="#707271" stroke="#707271" stroke-width="0.7"/>
<polygon points="297.3,506.4 308.7,513 332.1,554.9 321.8,549" fill="#6f7170" stroke="#6f7170" stroke-width="0.7"/>
<polygon points="308.7,513 320.8,518.8 343,560.1 332.1,554.9" fill="#6e706f" stroke="#6e706f" stroke-width="0.7"/>
<polygon points="320.8,518.8 333.4,524.1 354.6,564.6 343,560.1" fill="#6d6f6e" stroke="#6d6f6e" stroke-width="0.7"/>
<polygon points="333.4,524.1 346.2,528.8 366.5,568.7 354.6,564.6" fill="#6c6e6d" stroke="#6c6e6d" stroke-width="0.7"/>
<polygon points="346.2,528.8 359.2,533.1 378.8,572.4 366.5,568.7" fill="#6b6d6c" stroke="#6b6d6c" stroke-width="0.7"/>
<polygon points="359.2,533.1 372.5,537.1 391.1,575.8 378.8,572.4" fill="#6a6c6b" stroke="#6a6c6b" stroke-width="0.7"/>
<polygon points="372.5,537.1 386.2,540.5 403.7,578.9 391.1,575.8" fill="#6a6c6b" stroke="#6a6c6b" stroke-width="0.7"/>
<polygon points="386.2,540.5 400.2,543.4 416.5,581.7 403.7,578.9" fill="#696b6a" stroke="#696b6a" stroke-width="0.7"/>
<polygon points="400.2,543.4 414.5,545.8 429.5,584 416.5,581.7" fill="#686a68" stroke="#686a68" stroke-width="0.7"/>
<polygon points="414.5,545.8 429.2,547.6 442.9,585.8 429.5,584" fill="#666867" stroke="#666867" stroke-width="0.7"/>
<polygon points="429.2,547.6 444.2,549 456.5,587.2 442.9,585.8" fill="#656766" stroke="#656766" stroke-width="0.7"/>
<polygon points="444.2,549 459.4,549.8 470.4,588 456.5,587.2" fill="#656766" stroke="#656766" stroke-width="0.7"/>
<polygon points="459.4,549.8 474.7,550.2 484.4,588.4 470.4,588" fill="#646665" stroke="#646665" stroke-width="0.7"/>
<polygon points="474.7,550.2 490.2,550.1 498.5,588.3 484.4,588.4" fill="#636564" stroke="#636564" stroke-width="0.7"/>
<polygon points="490.2,550.1 505.8,549.6 512.8,587.7 498.5,588.3" fill="#626463" stroke="#626463" stroke-width="0.7"/>
<polygon points="280.2,507.4 287.4,517.2 321.2,562.7 316,554.3" fill="#696b6a" stroke="#696b6a" stroke-width="0.7"/>
<polygon points="287.4,517.2 295,526.3 327.1,570.4 321.2,562.7" fill="#696b6a" stroke="#696b6a" stroke-width="0.7"/>
<polygon points="295,526.3 303.3,534.7 333.5,577.5 327.1,570.4" fill="#6b6d6c" stroke="#6b6d6c" stroke-width="0.7"/>
<polygon points="303.3,534.7 312.2,542.3 340.6,584.1 333.5,577.5" fill="#6c6e6d" stroke="#6c6e6d" stroke-width="0.7"/>
<polygon points="312.2,542.3 321.8,549 348.5,590.1 340.6,584.1" fill="#6d6f6e" stroke="#6d6f6e" stroke-width="0.7"/>
<polygon points="321.8,549 332.1,554.9 357.2,595.4 348.5,590.1" fill="#6e706f" stroke="#6e706f" stroke-width="0.7"/>
<polygon points="332.1,554.9 343,560.1 366.8,600 357.2,595.4" fill="#6d6f6e" stroke="#6d6f6e" stroke-width="0.7"/>
<polygon points="343,560.1 354.6,564.6 377.2,603.9 366.8,600" fill="#6d6f6e" stroke="#6d6f6e" stroke-width="0.7"/>
<polygon points="354.6,564.6 366.5,568.7 388.2,607.3 377.2,603.9" fill="#6c6e6d" stroke="#6c6e6d" stroke-width="0.7"/>
<polygon points="366.5,568.7 378.8,572.4 399.5,610.2 388.2,607.3" fill="#6b6d6c" stroke="#6b6d6c" stroke-width="0.7"/>
<polygon points="378.8,572.4 391.1,575.8 411,613 399.5,610.2" fill="#6a6c6b" stroke="#6a6c6b" stroke-width="0.7"/>
<polygon points="391.1,575.8 403.7,578.9 422.5,615.6 411,613" fill="#696b6a" stroke="#696b6a" stroke-width="0.7"/>
<polygon points="403.7,578.9 416.5,581.7 434.1,618.1 422.5,615.6" fill="#686a69" stroke="#686a69" stroke-width="0.7"/>
<polygon points="416.5,581.7 429.5,584 445.9,620.3 434.1,618.1" fill="#686a68" stroke="#686a68" stroke-width="0.7"/>
<polygon points="429.5,584 442.9,585.8 458,622.1 445.9,620.3" fill="#676968" stroke="#676968" stroke-width="0.7"/>
<polygon points="442.9,585.8 456.5,587.2 470.3,623.4 458,622.1" fill="#666867" stroke="#666867" stroke-width="0.7"/>
<polygon points="456.5,587.2 470.4,588 482.8,624.3 470.3,623.4" fill="#656766" stroke="#656766" stroke-width="0.7"/>
<polygon points="470.4,588 484.4,588.4 495.5,624.7 482.8,624.3" fill="#646665" stroke="#646665" stroke-width="0.7"/>
<polygon points="484.4,588.4 498.5,588.3 508.3,624.4 495.5,624.7" fill="#636564" stroke="#636564" stroke-width="0.7"/>
<polygon points="498.5,588.3 512.8,587.7 521.2,623.6 508.3,624.4" fill="#636564" stroke="#636564" stroke-width="0.7"/>
<polygon points="321.2,562.7 327.1,570.4 361.7,614.2 358,608.3" fill="#676968" stroke="#676968" stroke-width="0.7"/>
<polygon points="327.1,570.4 333.5,577.5 366.4,619.7 361.7,614.2" fill="#686a69" stroke="#686a69" stroke-width="0.7"/>
<polygon points="333.5,577.5 340.6,584.1 372,624.7 366.4,619.7" fill="#696b6a" stroke="#696b6a" stroke-width="0.7"/>
<polygon points="340.6,584.1 348.5,590.1 378.5,629.2 372,624.7" fill="#6a6c6b" stroke="#6a6c6b" stroke-width="0.7"/>
<polygon points="348.5,590.1 357.2,595.4 385.8,633.3 378.5,629.2" fill="#6b6d6c" stroke="#6b6d6c" stroke-width="0.7"/>
<polygon points="357.2,595.4 366.8,600 393.9,636.9 385.8,633.3" fill="#6c6e6d" stroke="#6c6e6d" stroke-width="0.7"/>
<polygon points="366.8,600 377.2,603.9 402.7,640.1 393.9,636.9" fill="#6c6e6d" stroke="#6c6e6d" stroke-width="0.7"/>
<polygon points="377.2,603.9 388.2,607.3 412.1,642.9 402.7,640.1" fill="#6b6d6c" stroke="#6b6d6c" stroke-width="0.7"/>
<polygon points="388.2,607.3 399.5,610.2 421.9,645.4 412.1,642.9" fill="#6a6c6b" stroke="#6a6c6b" stroke-width="0.7"/>
<polygon points="399.5,610.2 411,613 432,647.9 421.9,645.4" fill="#6a6c6b" stroke="#6a6c6b" stroke-width="0.7"/>
<polygon points="411,613 422.5,615.6 442.3,650.2 432,647.9" fill="#696b6a" stroke="#696b6a" stroke-width="0.7"/>
<polygon points="422.5,615.6 434.1,618.1 452.8,652.4 442.3,650.2" fill="#686a69" stroke="#686a69" stroke-width="0.7"/>
<polygon points="434.1,618.1 445.9,620.3 463.4,654.4 452.8,652.4" fill="#686a68" stroke="#686a68" stroke-width="0.7"/>
<polygon points="445.9,620.3 458,622.1 474.2,656.1 463.4,654.4" fill="#676968" stroke="#676968" stroke-width="0.7"/>
<polygon points="458,622.1 470.3,623.4 485.2,657.4 474.2,656.1" fill="#666867" stroke="#666867" stroke-width="0.7"/>
<polygon points="470.3,623.4 482.8,624.3 496.4,658.2 485.2,657.4" fill="#656766" stroke="#656766" stroke-width="0.7"/>
<polygon points="482.8,624.3 495.5,624.7 507.7,658.5 496.4,658.2" fill="#656766" stroke="#656766" stroke-width="0.7"/>
<polygon points="495.5,624.7 508.3,624.4 519.2,658.1 507.7,658.5" fill="#646665" stroke="#646665" stroke-width="0.7"/>
<polygon points="508.3,624.4 521.2,623.6 530.8,657.1 519.2,658.1" fill="#646665" stroke="#646665" stroke-width="0.7"/>
<polygon points="361.7,614.2 366.4,619.7 403.1,658 400.7,654.7" fill="#666867" stroke="#666867" stroke-width="0.7"/>
<polygon points="366.4,619.7 372,624.7 406.6,661.2 403.1,658" fill="#666867" stroke="#666867" stroke-width="0.7"/>
<polygon points="372,624.7 378.5,629.2 411,664.4 406.6,661.2" fill="#676968" stroke="#676968" stroke-width="0.7"/>
<polygon points="378.5,629.2 385.8,633.3 416.3,667.5 411,664.4" fill="#696b6a" stroke="#696b6a" stroke-width="0.7"/>
<polygon points="385.8,633.3 393.9,636.9 422.4,670.4 416.3,667.5" fill="#696b6a" stroke="#696b6a" stroke-width="0.7"/>
<polygon points="393.9,636.9 402.7,640.1 429.2,673.3 422.4,670.4" fill="#6a6c6b" stroke="#6a6c6b" stroke-width="0.7"/>
<polygon points="402.7,640.1 412.1,642.9 436.7,676 429.2,673.3" fill="#6a6c6b" stroke="#6a6c6b" stroke-width="0.7"/>
<polygon points="412.1,642.9 421.9,645.4 444.8,678.5 436.7,676" fill="#6a6c6b" stroke="#6a6c6b" stroke-width="0.7"/>
<polygon points="421.9,645.4 432,647.9 453.4,680.8 444.8,678.5" fill="#696b6a" stroke="#696b6a" stroke-width="0.7"/>
<polygon points="432,647.9 442.3,650.2 462.5,682.9 453.4,680.8" fill="#696b6a" stroke="#696b6a" stroke-width="0.7"/>
<polygon points="442.3,650.2 452.8,652.4 471.9,684.7 462.5,682.9" fill="#686a69" stroke="#686a69" stroke-width="0.7"/>
<polygon points="452.8,652.4 463.4,654.4 481.6,686.3 471.9,684.7" fill="#686a68" stroke="#686a68" stroke-width="0.7"/>
<polygon points="463.4,654.4 474.2,656.1 491.3,687.7 481.6,686.3" fill="#676968" stroke="#676968" stroke-width="0.7"/>
<polygon points="474.2,656.1 485.2,657.4 501.1,688.8 491.3,687.7" fill="#666867" stroke="#666867" stroke-width="0.7"/>
<polygon points="485.2,657.4 496.4,658.2 510.9,689.4 501.1,688.8" fill="#666867" stroke="#666867" stroke-width="0.7"/>
<polygon points="496.4,658.2 507.7,658.5 520.9,689.6 510.9,689.4" fill="#656766" stroke="#656766" stroke-width="0.7"/>
<polygon points="507.7,658.5 519.2,658.1 531,689.1 520.9,689.6" fill="#656766" stroke="#656766" stroke-width="0.7"/>
<polygon points="519.2,658.1 530.8,657.1 541.3,687.9 531,689.1" fill="#646665" stroke="#646665" stroke-width="0.7"/>
<polygon points="403.1,658 406.6,661.2 439.7,696.5 438.3,694.9" fill="#646665" stroke="#646665" stroke-width="0.7"/>
<polygon points="406.6,661.2 411,664.4 442.2,698.4 439.7,696.5" fill="#656766" stroke="#656766" stroke-width="0.7"/>
<polygon points="411,664.4 416.3,667.5 445.8,700.6 442.2,698.4" fill="#676968" stroke="#676968" stroke-width="0.7"/>
<polygon points="416.3,667.5 422.4,670.4 450.2,702.9 445.8,700.6" fill="#686a69" stroke="#686a69" stroke-width="0.7"/>
<polygon points="422.4,670.4 429.2,673.3 455.4,705.4 450.2,702.9" fill="#696b6a" stroke="#696b6a" stroke-width="0.7"/>
<polygon points="429.2,673.3 436.7,676 461.4,707.8 455.4,705.4" fill="#696b6a" stroke="#696b6a" stroke-width="0.7"/>
<polygon points="436.7,676 444.8,678.5 468.2,709.9 461.4,707.8" fill="#696b6a" stroke="#696b6a" stroke-width="0.7"/>
<polygon points="444.8,678.5 453.4,680.8 475.6,711.9 468.2,709.9" fill="#696b6a" stroke="#696b6a" stroke-width="0.7"/>
<polygon points="453.4,680.8 462.5,682.9 483.5,713.5 475.6,711.9" fill="#686a69" stroke="#686a69" stroke-width="0.7"/>
<polygon points="462.5,682.9 471.9,684.7 491.7,715 483.5,713.5" fill="#686a69" stroke="#686a69" stroke-width="0.7"/>
<polygon points="471.9,684.7 481.6,686.3 500.2,716.1 491.7,715" fill="#686a68" stroke="#686a68" stroke-width="0.7"/>
<polygon points="481.6,686.3 491.3,687.7 508.8,717 500.2,716.1" fill="#676968" stroke="#676968" stroke-width="0.7"/>
<polygon points="491.3,687.7 501.1,688.8 517.4,717.7 508.8,717" fill="#676968" stroke="#676968" stroke-width="0.7"/>
<polygon points="501.1,688.8 510.9,689.4 526,718 517.4,717.7" fill="#666867" stroke="#666867" stroke-width="0.7"/>
<polygon points="510.9,689.4 520.9,689.6 534.7,717.9 526,718" fill="#666867" stroke="#666867" stroke-width="0.7"/>
<polygon points="520.9,689.6 531,689.1 543.4,717.2 534.7,717.9" fill="#666867" stroke="#666867" stroke-width="0.7"/>
<polygon points="531,689.1 541.3,687.9 552.2,715.9 543.4,717.2" fill="#656766" stroke="#656766" stroke-width="0.7"/>
<polygon points="438.3,694.9 439.7,696.5 472.9,729.4 473,729.5" fill="#636564" stroke="#636564" stroke-width="0.7"/>
<polygon points="439.7,696.5 442.2,698.4 474.1,729.9 472.9,729.4" fill="#646665" stroke="#646665" stroke-width="0.7"/>
<polygon points="442.2,698.4 445.8,700.6 476.4,730.9 474.1,729.9" fill="#656766" stroke="#656766" stroke-width="0.7"/>
<polygon points="445.8,700.6 450.2,702.9 479.7,732.3 476.4,730.9" fill="#666867" stroke="#666867" stroke-width="0.7"/>
<polygon points="450.2,702.9 455.4,705.4 483.8,734 479.7,732.3" fill="#676968" stroke="#676968" stroke-width="0.7"/>
<polygon points="455.4,705.4 461.4,707.8 488.6,735.9 483.8,734" fill="#696b6a" stroke="#696b6a" stroke-width="0.7"/>
<polygon points="461.4,707.8 468.2,709.9 493.9,737.9 488.6,735.9" fill="#686a69" stroke="#686a69" stroke-width="0.7"/>
<polygon points="468.2,709.9 475.6,711.9 499.6,739.9 493.9,737.9" fill="#686a69" stroke="#686a69" stroke-width="0.7"/>
<polygon points="475.6,711.9 483.5,713.5 506,741.4 499.6,739.9" fill="#686a69" stroke="#686a69" stroke-width="0.7"/>
<polygon points="483.5,713.5 491.7,715 512.8,742.6 506,741.4" fill="#686a69" stroke="#686a69" stroke-width="0.7"/>
<polygon points="491.7,715 500.2,716.1 519.8,743.5 512.8,742.6" fill="#686a68" stroke="#686a68" stroke-width="0.7"/>
<polygon points="500.2,716.1 508.8,717 527,743.9 519.8,743.5" fill="#676968" stroke="#676968" stroke-width="0.7"/>
<polygon points="508.8,717 517.4,717.7 534.3,743.9 527,743.9" fill="#676968" stroke="#676968" stroke-width="0.7"/>
<polygon points="517.4,717.7 526,718 541.6,743.7 534.3,743.9" fill="#676968" stroke="#676968" stroke-width="0.7"/>
<polygon points="526,718 534.7,717.9 548.8,743.2 541.6,743.7" fill="#676968" stroke="#676968" stroke-width="0.7"/>
<polygon points="534.7,717.9 543.4,717.2 556.1,742.4 548.8,743.2" fill="#666867" stroke="#666867" stroke-width="0.7"/>
<polygon points="543.4,717.2 552.2,715.9 563.4,741.2 556.1,742.4" fill="#666867" stroke="#666867" stroke-width="0.7"/>
<polygon points="473,729.5 472.9,729.4 506.5,757 507.5,758.3" fill="#616362" stroke="#616362" stroke-width="0.7"/>
<polygon points="472.9,729.4 474.1,729.9 506.9,756.6 506.5,757" fill="#636564" stroke="#636564" stroke-width="0.7"/>
<polygon points="474.1,729.9 476.4,730.9 508.4,756.9 506.9,756.6" fill="#646665" stroke="#646665" stroke-width="0.7"/>
<polygon points="476.4,730.9 479.7,732.3 510.8,757.8 508.4,756.9" fill="#656766" stroke="#656766" stroke-width="0.7"/>
<polygon points="479.7,732.3 483.8,734 514,759 510.8,757.8" fill="#676968" stroke="#676968" stroke-width="0.7"/>
<polygon points="483.8,734 488.6,735.9 517.8,760.5 514,759" fill="#686a69" stroke="#686a69" stroke-width="0.7"/>
<polygon points="488.6,735.9 493.9,737.9 522,762 517.8,760.5" fill="#686a69" stroke="#686a69" stroke-width="0.7"/>
<polygon points="493.9,737.9 499.6,739.9 526.9,762.9 522,762" fill="#686a69" stroke="#686a69" stroke-width="0.7"/>
<polygon points="499.6,739.9 506,741.4 532.1,763.6 526.9,762.9" fill="#686a69" stroke="#686a69" stroke-width="0.7"/>
<polygon points="506,741.4 512.8,742.6 537.4,764.1 532.1,763.6" fill="#686a69" stroke="#686a69" stroke-width="0.7"/>
<polygon points="512.8,742.6 519.8,743.5 542.7,764.4 537.4,764.1" fill="#686a68" stroke="#686a68" stroke-width="0.7"/>
<polygon points="519.8,743.5 527,743.9 547.9,764.6 542.7,764.4" fill="#676968" stroke="#676968" stroke-width="0.7"/>
<polygon points="527,743.9 534.3,743.9 553.1,764.7 547.9,764.6" fill="#676968" stroke="#676968" stroke-width="0.7"/>
<polygon points="534.3,743.9 541.6,743.7 558.3,764.7 553.1,764.7" fill="#676968" stroke="#676968" stroke-width="0.7"/>
<polygon points="541.6,743.7 548.8,743.2 563.5,764.5 558.3,764.7" fill="#676968" stroke="#676968" stroke-width="0.7"/>
<polygon points="548.8,743.2 556.1,742.4 568.8,764.2 563.5,764.5" fill="#676968" stroke="#676968" stroke-width="0.7"/>
<polygon points="556.1,742.4 563.4,741.2 574.4,763.8 568.8,764.2" fill="#676968" stroke="#676968" stroke-width="0.7"/>
<polygon points="507.5,758.3 506.5,757 531,771.5 532,772.9" fill="#606262" stroke="#606262" stroke-width="0.7"/>
<polygon points="506.5,757 506.9,756.6 531.4,770.9 531,771.5" fill="#616362" stroke="#616362" stroke-width="0.7"/>
<polygon points="506.9,756.6 508.4,756.9 532.8,770.9 531.4,770.9" fill="#626463" stroke="#626463" stroke-width="0.7"/>
<polygon points="508.4,756.9 510.8,757.8 535.1,771.3 532.8,770.9" fill="#646665" stroke="#646665" stroke-width="0.7"/>
<polygon points="510.8,757.8 514,759 538,772.1 535.1,771.3" fill="#656766" stroke="#656766" stroke-width="0.7"/>
<polygon points="514,759 517.8,760.5 541.3,773 538,772.1" fill="#676968" stroke="#676968" stroke-width="0.7"/>
<polygon points="517.8,760.5 522,762 544.9,774 541.3,773" fill="#686a68" stroke="#686a68" stroke-width="0.7"/>
<polygon points="522,762 526.9,762.9 548.6,775 544.9,774" fill="#686a68" stroke="#686a68" stroke-width="0.7"/>
<polygon points="526.9,762.9 532.1,763.6 552.3,775.9 548.6,775" fill="#686a68" stroke="#686a68" stroke-width="0.7"/>
<polygon points="532.1,763.6 537.4,764.1 556,776.6 552.3,775.9" fill="#686a68" stroke="#686a68" stroke-width="0.7"/>
<polygon points="537.4,764.1 542.7,764.4 559.6,777.2 556,776.6" fill="#686a68" stroke="#686a68" stroke-width="0.7"/>
<polygon points="542.7,764.4 547.9,764.6 563.2,777.6 559.6,777.2" fill="#686a68" stroke="#686a68" stroke-width="0.7"/>
<polygon points="547.9,764.6 553.1,764.7 566.7,777.8 563.2,777.6" fill="#686a68" stroke="#686a68" stroke-width="0.7"/>
<polygon points="553.1,764.7 558.3,764.7 570.3,777.9 566.7,777.8" fill="#686a68" stroke="#686a68" stroke-width="0.7"/>
<polygon points="558.3,764.7 563.5,764.5 574,778 570.3,777.9" fill="#686a68" stroke="#686a68" stroke-width="0.7"/>
<polygon points="563.5,764.5 568.8,764.2 577.8,778.2 574,778" fill="#686a68" stroke="#686a68" stroke-width="0.7"/>
<polygon points="568.8,764.2 574.4,763.8 581.9,778.7 577.8,778.2" fill="#686a68" stroke="#686a68" stroke-width="0.7"/>
<polygon points="502.1,323.6 626.4,304 620.4,329.7 498.9,348.2" fill="url(#bl0)" stroke="url(#bl0)" stroke-width="0.7"/>
<polygon points="498.9,348.2 620.4,329.7 611.7,368.1 496,387.4" fill="url(#bl1)" stroke="url(#bl1)" stroke-width="0.7"/>
<polygon points="496,387.4 611.7,368.1 604.8,409.1 495.4,428" fill="url(#bl2)" stroke="url(#bl2)" stroke-width="0.7"/>
<polygon points="495.4,428 604.8,409.1 599.5,450.2 496.9,469.1" fill="url(#bl3)" stroke="url(#bl3)" stroke-width="0.7"/>
<polygon points="496.9,469.1 599.5,450.2 596,492 500.4,509.9" fill="url(#bl4)" stroke="url(#bl4)" stroke-width="0.7"/>
<polygon points="500.4,509.9 596,492 593.7,532.6 505.8,549.6" fill="url(#bl5)" stroke="url(#bl5)" stroke-width="0.7"/>
<polygon points="505.8,549.6 593.7,532.6 593.1,571.9 512.8,587.7" fill="url(#bl6)" stroke="url(#bl6)" stroke-width="0.7"/>
<polygon points="512.8,587.7 593.1,571.9 593.7,609.1 521.2,623.6" fill="url(#bl7)" stroke="url(#bl7)" stroke-width="0.7"/>
<polygon points="521.2,623.6 593.7,609.1 594.7,644.6 530.8,657.1" fill="url(#bl8)" stroke="url(#bl8)" stroke-width="0.7"/>
<polygon points="530.8,657.1 594.7,644.6 596.7,676 541.3,687.9" fill="url(#bl9)" stroke="url(#bl9)" stroke-width="0.7"/>
<polygon points="541.3,687.9 596.7,676 600.5,706.3 552.2,715.9" fill="url(#bl10)" stroke="url(#bl10)" stroke-width="0.7"/>
<polygon points="552.2,715.9 600.5,706.3 604.5,733.2 563.4,741.2" fill="url(#bl11)" stroke="url(#bl11)" stroke-width="0.7"/>
<polygon points="563.4,741.2 604.5,733.2 608.8,757 574.4,763.8" fill="url(#bl12)" stroke="url(#bl12)" stroke-width="0.7"/>
<polygon points="574.4,763.8 608.8,757 612.3,771.8 581.9,778.7" fill="url(#bl13)" stroke="url(#bl13)" stroke-width="0.7"/>
<path d="M146.4 223.7L155.1 233.5L165 242.7L175.8 251.5L187.6 259.7L200.5 267.5L214.2 274.8L228.9 281.7L244.5 288.2L260.9 294.2L278.2 299.8L296.1 305L314.8 309.7L334 313.8L353.9 317.5L374.2 320.5L395 323L416.1 324.7L437.4 325.7L458.9 326L480.5 325.3L502.1 323.6L626.4 304M153 252.3L161.3 260.9L170.6 269.2L180.8 277.3L192.1 285.1L204.4 292.6L217.6 299.8L231.8 306.7L246.8 313.1L262.8 319.2L279.5 324.8L297 329.9L315.2 334.6L334.1 338.7L353.5 342.3L373.4 345.2L393.8 347.6L414.5 349.2L435.5 350.1L456.6 350.3L477.8 349.7L498.9 348.2L620.4 329.7M163.5 292.4L171.8 300.4L181 308.5L191.1 316.4L202.1 324.2L213.9 331.7L226.5 339L240.1 346L254.5 352.5L269.7 358.7L285.7 364.3L302.4 369.5L319.9 374.1L337.9 378.1L356.5 381.5L375.6 384.4L395.1 386.5L415 388L435.1 388.9L455.4 389.1L475.7 388.6L496 387.4L611.7 368.1M176.5 330.4L185.7 338.8L195.5 347.2L205.7 355.5L216.2 363.8L227.5 371.9L239.6 379.5L252.7 386.7L266.5 393.4L281 399.6L296.2 405.2L312.1 410.3L328.6 414.8L345.7 418.7L363.3 422L381.3 424.7L399.8 426.8L418.6 428.2L437.7 429L456.9 429.2L476.1 428.9L495.4 428L604.8 409.1M194.5 367.9L203.7 377.5L213.1 386.9L222.7 396.2L233 405.1L244.2 413.4L256.1 421.1L268.8 428.3L282.1 435L295.9 441.1L310.3 446.7L325.2 451.7L340.7 456L356.7 459.8L373.2 463L390.1 465.5L407.3 467.5L424.9 468.9L442.8 469.7L460.7 470L478.8 469.8L496.9 469.1L599.5 450.2M215.2 408.2L223.9 418.8L232.8 429.1L242.3 438.8L252.5 447.8L263.7 456L275.5 463.6L287.7 470.5L300.5 476.9L313.6 482.7L327.2 488L341.1 492.8L355.5 497L370.4 500.6L385.6 503.6L401.3 506.1L417.3 508L433.6 509.3L450.1 510.2L466.8 510.5L483.6 510.4L500.4 509.9L596 492M240.6 451.5L248.9 462.4L257.7 472.5L266.9 482.1L276.4 490.9L286.5 499.1L297.3 506.4L308.7 513L320.8 518.8L333.4 524.1L346.2 528.8L359.2 533.1L372.5 537.1L386.2 540.5L400.2 543.4L414.5 545.8L429.2 547.6L444.2 549L459.4 549.8L474.7 550.2L490.2 550.1L505.8 549.6L593.7 532.6M281.9 509.9L287.4 517.2L295 526.3L303.3 534.7L312.2 542.3L321.8 549L332.1 554.9L343 560.1L354.6 564.6L366.5 568.7L378.8 572.4L391.1 575.8L403.7 578.9L416.5 581.7L429.5 584L442.9 585.8L456.5 587.2L470.4 588L484.4 588.4L498.5 588.3L512.8 587.7L593.1 571.9M324.3 567L327.1 570.4L333.5 577.5L340.6 584.1L348.5 590.1L357.2 595.4L366.8 600L377.2 603.9L388.2 607.3L399.5 610.2L411 613L422.5 615.6L434.1 618.1L445.9 620.3L458 622.1L470.3 623.4L482.8 624.3L495.5 624.7L508.3 624.4L521.2 623.6L593.7 609.1M364.2 617.3L366.4 619.7L372 624.7L378.5 629.2L385.8 633.3L393.9 636.9L402.7 640.1L412.1 642.9L421.9 645.4L432 647.9L442.3 650.2L452.8 652.4L463.4 654.4L474.2 656.1L485.2 657.4L496.4 658.2L507.7 658.5L519.2 658.1L530.8 657.1L594.7 644.6M403.9 658.8L406.6 661.2L411 664.4L416.3 667.5L422.4 670.4L429.2 673.3L436.7 676L444.8 678.5L453.4 680.8L462.5 682.9L471.9 684.7L481.6 686.3L491.3 687.7L501.1 688.8L510.9 689.4L520.9 689.6L531 689.1L541.3 687.9L596.7 676M438.9 695.8L439.7 696.5L442.2 698.4L445.8 700.6L450.2 702.9L455.4 705.4L461.4 707.8L468.2 709.9L475.6 711.9L483.5 713.5L491.7 715L500.2 716.1L508.8 717L517.4 717.7L526 718L534.7 717.9L543.4 717.2L552.2 715.9L600.5 706.3M472.7 729.4L472.9 729.4L474.1 729.9L476.4 730.9L479.7 732.3L483.8 734L488.6 735.9L493.9 737.9L499.6 739.9L506 741.4L512.8 742.6L519.8 743.5L527 743.9L534.3 743.9L541.6 743.7L548.8 743.2L556.1 742.4L563.4 741.2L604.5 733.2M506.7 757.3L506.5 757L506.9 756.6L508.4 756.9L510.8 757.8L514 759L517.8 760.5L522 762L526.9 762.9L532.1 763.6L537.4 764.1L542.7 764.4L547.9 764.6L553.1 764.7L558.3 764.7L563.5 764.5L568.8 764.2L574.4 763.8L608.8 757M531.1 770.9L531.4 770.9L532.8 770.9L535.1 771.3L538 772.1L541.3 773L544.9 774L548.6 775L552.3 775.9L556 776.6L559.6 777.2L563.2 777.6L566.7 777.8L570.3 777.9L574 778L577.8 778.2L581.9 778.7L612.3 771.8M146.4 223.7L153 252.3L163.5 292.4L176.5 330.4L194.5 367.9L215.2 408.2L240.6 451.5L240.6 451.5L240.6 451.5L240.6 451.5L240.6 451.5M155.1 233.5L161.3 260.9L171.8 300.4L185.7 338.8L203.7 377.5L223.9 418.8L248.9 462.4L255.1 471.5L261.5 480.8L268 490.2L274.7 499.7M165 242.7L170.6 269.2L181 308.5L195.5 347.2L213.1 386.9L232.8 429.1L257.7 472.5L287.4 517.2L291.7 523.5L296.2 529.8L300.8 536.1L305.4 542.3M175.8 251.5L180.8 277.3L191.1 316.4L205.7 355.5L222.7 396.2L242.3 438.8L266.9 482.1L295 526.3L327.1 570.4L330.8 575.3L334.5 580.2L338.3 585.2L342.1 590.1M187.6 259.7L192.1 285.1L202.1 324.2L216.2 363.8L233 405.1L252.5 447.8L276.4 490.9L303.3 534.7L333.5 577.5L366.4 619.7L372.7 626.7L379.1 633.6L385.5 640.3L392 646.9M200.5 267.5L204.4 292.6L213.9 331.7L227.5 371.9L244.2 413.4L263.7 456L286.5 499.1L312.2 542.3L340.6 584.1L372 624.7L406.6 661.2L439.7 696.5L472.9 729.4L506.5 757L508.4 758.4L510.4 759.8L512.3 761.2L514.2 762.6M214.2 274.8L217.6 299.8L226.5 339L239.6 379.5L256.1 421.1L275.5 463.6L297.3 506.4L321.8 549L348.5 590.1L378.5 629.2L411 664.4L442.2 698.4L474.1 729.9L506.9 756.6L531.4 770.9M228.9 281.7L231.8 306.7L240.1 346L252.7 386.7L268.8 428.3L287.7 470.5L308.7 513L332.1 554.9L357.2 595.4L385.8 633.3L416.3 667.5L445.8 700.6L476.4 730.9L508.4 756.9L532.8 770.9M244.5 288.2L246.8 313.1L254.5 352.5L266.5 393.4L282.1 435L300.5 476.9L320.8 518.8L343 560.1L366.8 600L393.9 636.9L422.4 670.4L450.2 702.9L479.7 732.3L510.8 757.8L535.1 771.3M260.9 294.2L262.8 319.2L269.7 358.7L281 399.6L295.9 441.1L313.6 482.7L333.4 524.1L354.6 564.6L377.2 603.9L402.7 640.1L429.2 673.3L455.4 705.4L483.8 734L514 759L538 772.1M278.2 299.8L279.5 324.8L285.7 364.3L296.2 405.2L310.3 446.7L327.2 488L346.2 528.8L366.5 568.7L388.2 607.3L412.1 642.9L436.7 676L461.4 707.8L488.6 735.9L517.8 760.5L541.3 773M296.1 305L297 329.9L302.4 369.5L312.1 410.3L325.2 451.7L341.1 492.8L359.2 533.1L378.8 572.4L399.5 610.2L421.9 645.4L444.8 678.5L468.2 709.9L493.9 737.9L522 762L544.9 774M314.8 309.7L315.2 334.6L319.9 374.1L328.6 414.8L340.7 456L355.5 497L372.5 537.1L391.1 575.8L411 613L432 647.9L453.4 680.8L475.6 711.9L499.6 739.9L526.9 762.9L548.6 775M334 313.8L334.1 338.7L337.9 378.1L345.7 418.7L356.7 459.8L370.4 500.6L386.2 540.5L403.7 578.9L422.5 615.6L442.3 650.2L462.5 682.9L483.5 713.5L506 741.4L532.1 763.6L552.3 775.9M353.9 317.5L353.5 342.3L356.5 381.5L363.3 422L373.2 463L385.6 503.6L400.2 543.4L416.5 581.7L434.1 618.1L452.8 652.4L471.9 684.7L491.7 715L512.8 742.6L537.4 764.1L556 776.6M374.2 320.5L373.4 345.2L375.6 384.4L381.3 424.7L390.1 465.5L401.3 506.1L414.5 545.8L429.5 584L445.9 620.3L463.4 654.4L481.6 686.3L500.2 716.1L519.8 743.5L542.7 764.4L559.6 777.2M395 323L393.8 347.6L395.1 386.5L399.8 426.8L407.3 467.5L417.3 508L429.2 547.6L442.9 585.8L458 622.1L474.2 656.1L491.3 687.7L508.8 717L527 743.9L547.9 764.6L563.2 777.6M416.1 324.7L414.5 349.2L415 388L418.6 428.2L424.9 468.9L433.6 509.3L444.2 549L456.5 587.2L470.3 623.4L485.2 657.4L501.1 688.8L517.4 717.7L534.3 743.9L553.1 764.7L566.7 777.8M437.4 325.7L435.5 350.1L435.1 388.9L437.7 429L442.8 469.7L450.1 510.2L459.4 549.8L470.4 588L482.8 624.3L496.4 658.2L510.9 689.4L526 718L541.6 743.7L558.3 764.7L570.3 777.9M458.9 326L456.6 350.3L455.4 389.1L456.9 429.2L460.7 470L466.8 510.5L474.7 550.2L484.4 588.4L495.5 624.7L507.7 658.5L520.9 689.6L534.7 717.9L548.8 743.2L563.5 764.5L574 778M480.5 325.3L477.8 349.7L475.7 388.6L476.1 428.9L478.8 469.8L483.6 510.4L490.2 550.1L498.5 588.3L508.3 624.4L519.2 658.1L531 689.1L543.4 717.2L556.1 742.4L568.8 764.2L577.8 778.2M502.1 323.6L498.9 348.2L496 387.4L495.4 428L496.9 469.1L500.4 509.9L505.8 549.6L512.8 587.7L521.2 623.6L530.8 657.1L541.3 687.9L552.2 715.9L563.4 741.2L574.4 763.8L581.9 778.7" stroke="#0a0a0a" stroke-opacity="0.88" stroke-width="0.82" fill="none" stroke-linejoin="round"/>
</g>
<path d="M146.4 223.7L155.1 233.5L165 242.7L175.8 251.5L187.6 259.7L200.5 267.5L214.2 274.8L228.9 281.7L244.5 288.2L260.9 294.2L278.2 299.8L296.1 305L314.8 309.7L334 313.8L353.9 317.5L374.2 320.5L395 323L416.1 324.7L437.4 325.7L458.9 326L480.5 325.3L502.1 323.6L626.4 304" stroke="#0a0a0a" stroke-opacity="0.88" stroke-width="0.82" fill="none" stroke-linejoin="round"/>
<path d="M612.3 771.8L581.9 778.7L568.7 778.9L555.8 777.7L539.7 774.8L526.8 770L513.9 762.7L499.4 752.3L478.4 734.5L454.2 712.7L430 685.5L412.3 667.1L396.1 651L380 636.5L355 610L335 583.8L317.5 560L304.1 546L283.1 514.8L263.7 487.3L245.9 461.5L228.2 430.8L213.6 405.7L199.9 377.5L186.2 350L177.5 331L163.9 292.2L152.1 251.3L146.8 224.7" stroke="#0a0a0a" stroke-opacity="0.88" stroke-width="0.82" fill="none" stroke-linejoin="round"/>
</g>
<g id="rightmesh">
<g clip-path="url(#cr)">
<polygon points="626.4,304 777.1,415.6 793,424.7 809.4,433.5 826.3,442.1 843.7,450.5 861.5,458.7 879.8,466.7 898.5,474.5 917.7,482.1 937.2,489.4 957.2,496.6 977.4,503.5 998.1,510.1 1019,516.5 1040.3,522.7 1061.8,528.5 1083.5,534.1 1105.4,539.3 1127.5,544.1 1149.7,548.6 1172.1,552.7 1194.5,556.4 1216.9,559.6 1239.2,562.3 1262,562.3 1262,982.2 1252.5,982.2 1239.1,984.6 1228.9,986.5 1215.7,989 1205.7,990.9 1195.7,992.6 1182.8,995 1173,996.7 1163.2,998.4 1153.6,1000 1143.9,1001.5 1134.3,1002.8 1124.8,1003.8 1115.3,1004.6 1108.8,1005 1099.5,1005.4 1090.3,1005.6 1084.1,1005.8 1075.1,1005.5 1073.8,1005.3 1060,1003.5 1046.2,1002.7 1032.4,1002.1 1018.6,1001 1004.8,999.5 991.1,997.5 977.4,995.1 963.7,992.3 950.2,989.1 936.7,985.5 923.3,981.7 910,977.5 896.9,973 883.8,968.2 870.9,963.2 858.1,958 845.5,952.5 833,946.8 820.7,940.9 808.5,934.8 796.5,928.5 784.7,922 773.1,915.3 761.7,908.4 750.4,901.4 739.4,894.1 728.6,886.7 717.9,879.1 612.3,771.8 608.8,757 604.5,733.2 600.5,706.3 596.7,676 594.7,644.6 593.7,609.1 593.1,571.9 593.7,532.6 596,492 599.5,450.2 604.8,409.1 611.7,368.1 620.4,329.7" fill="#4f5150"/>
<polygon points="626.4,304 777.1,415.6 772.5,444 620.4,329.7" fill="url(#b0)" stroke="url(#b0)" stroke-width="0.7"/>
<polygon points="620.4,329.7 772.5,444 765.3,488.4 611.7,368.1" fill="url(#b1)" stroke="url(#b1)" stroke-width="0.7"/>
<polygon points="611.7,368.1 765.3,488.4 758.1,533.4 604.8,409.1" fill="url(#b2)" stroke="url(#b2)" stroke-width="0.7"/>
<polygon points="604.8,409.1 758.1,533.4 751.1,578.1 599.5,450.2" fill="url(#b3)" stroke="url(#b3)" stroke-width="0.7"/>
<polygon points="599.5,450.2 751.1,578.1 744.4,621.4 596,492" fill="url(#b4)" stroke="url(#b4)" stroke-width="0.7"/>
<polygon points="596,492 744.4,621.4 738,662.7 593.7,532.6" fill="url(#b5)" stroke="url(#b5)" stroke-width="0.7"/>
<polygon points="593.7,532.6 738,662.7 732.2,701.4 593.1,571.9" fill="url(#b6)" stroke="url(#b6)" stroke-width="0.7"/>
<polygon points="593.1,571.9 732.2,701.4 726.9,736.8 593.7,609.1" fill="url(#b7)" stroke="url(#b7)" stroke-width="0.7"/>
<polygon points="593.7,609.1 726.9,736.8 722.3,768.9 594.7,644.6" fill="url(#b8)" stroke="url(#b8)" stroke-width="0.7"/>
<polygon points="594.7,644.6 722.3,768.9 718.2,797.3 596.7,676" fill="url(#b9)" stroke="url(#b9)" stroke-width="0.7"/>
<polygon points="596.7,676 718.2,797.3 714.8,822.2 600.5,706.3" fill="url(#b10)" stroke="url(#b10)" stroke-width="0.7"/>
<polygon points="600.5,706.3 714.8,822.2 712,843.6 604.5,733.2" fill="url(#b11)" stroke="url(#b11)" stroke-width="0.7"/>
<polygon points="604.5,733.2 712,843.6 709.7,861.8 608.8,757" fill="url(#b12)" stroke="url(#b12)" stroke-width="0.7"/>
<polygon points="608.8,757 709.7,861.8 708.5,872.1 612.3,771.8" fill="url(#b13)" stroke="url(#b13)" stroke-width="0.7"/>
<polygon points="777.1,415.6 809.4,433.5 805.1,462.3 772.5,444" fill="url(#r14)" stroke="url(#r14)" stroke-width="0.7"/>
<polygon points="809.4,433.5 843.7,450.5 839.8,480 805.1,462.3" fill="url(#r15)" stroke="url(#r15)" stroke-width="0.7"/>
<polygon points="843.7,450.5 879.8,466.7 876.4,496.9 839.8,480" fill="url(#r16)" stroke="url(#r16)" stroke-width="0.7"/>
<polygon points="879.8,466.7 917.7,482.1 914.8,513 876.4,496.9" fill="url(#r17)" stroke="url(#r17)" stroke-width="0.7"/>
<polygon points="917.7,482.1 957.2,496.6 954.8,528.1 914.8,513" fill="url(#r18)" stroke="url(#r18)" stroke-width="0.7"/>
<polygon points="957.2,496.6 998.1,510.1 996.4,542.2 954.8,528.1" fill="url(#r19)" stroke="url(#r19)" stroke-width="0.7"/>
<polygon points="998.1,510.1 1040.3,522.7 1039.2,555.2 996.4,542.2" fill="url(#r20)" stroke="url(#r20)" stroke-width="0.7"/>
<polygon points="1040.3,522.7 1083.5,534.1 1083.2,566.9 1039.2,555.2" fill="url(#r21)" stroke="url(#r21)" stroke-width="0.7"/>
<polygon points="1083.5,534.1 1127.5,544.1 1128,577.3 1083.2,566.9" fill="url(#r22)" stroke="url(#r22)" stroke-width="0.7"/>
<polygon points="1127.5,544.1 1172.1,552.7 1173.4,586.2 1128,577.3" fill="url(#r23)" stroke="url(#r23)" stroke-width="0.7"/>
<polygon points="1172.1,552.7 1216.9,559.6 1219.2,593.7 1173.4,586.2" fill="url(#r24)" stroke="url(#r24)" stroke-width="0.7"/>
<polygon points="1216.9,559.6 1261.5,564.5 1264.8,599.5 1219.2,593.7" fill="url(#r25)" stroke="url(#r25)" stroke-width="0.7"/>
<polygon points="772.5,444 805.1,462.3 798.2,507.3 765.3,488.4" fill="url(#r26)" stroke="url(#r26)" stroke-width="0.7"/>
<polygon points="805.1,462.3 839.8,480 833.2,525.8 798.2,507.3" fill="url(#r27)" stroke="url(#r27)" stroke-width="0.7"/>
<polygon points="839.8,480 876.4,496.9 870.1,543.6 833.2,525.8" fill="url(#r28)" stroke="url(#r28)" stroke-width="0.7"/>
<polygon points="876.4,496.9 914.8,513 908.9,560.5 870.1,543.6" fill="url(#r29)" stroke="url(#r29)" stroke-width="0.7"/>
<polygon points="914.8,513 954.8,528.1 949.4,576.5 908.9,560.5" fill="url(#r30)" stroke="url(#r30)" stroke-width="0.7"/>
<polygon points="954.8,528.1 996.4,542.2 991.4,591.3 949.4,576.5" fill="url(#r31)" stroke="url(#r31)" stroke-width="0.7"/>
<polygon points="996.4,542.2 1039.2,555.2 1034.7,604.8 991.4,591.3" fill="url(#r32)" stroke="url(#r32)" stroke-width="0.7"/>
<polygon points="1039.2,555.2 1083.2,566.9 1079.2,617 1034.7,604.8" fill="url(#r33)" stroke="url(#r33)" stroke-width="0.7"/>
<polygon points="1083.2,566.9 1128,577.3 1124.7,627.8 1079.2,617" fill="url(#r34)" stroke="url(#r34)" stroke-width="0.7"/>
<polygon points="1128,577.3 1173.4,586.2 1170.7,637.2 1124.7,627.8" fill="url(#r35)" stroke="url(#r35)" stroke-width="0.7"/>
<polygon points="1173.4,586.2 1219.2,593.7 1217.2,645.3 1170.7,637.2" fill="url(#r36)" stroke="url(#r36)" stroke-width="0.7"/>
<polygon points="1219.2,593.7 1264.8,599.5 1263.6,651.9 1217.2,645.3" fill="url(#r37)" stroke="url(#r37)" stroke-width="0.7"/>
<polygon points="765.3,488.4 798.2,507.3 791,552.9 758.1,533.4" fill="url(#r38)" stroke="url(#r38)" stroke-width="0.7"/>
<polygon points="798.2,507.3 833.2,525.8 825.9,572 791,552.9" fill="url(#r39)" stroke="url(#r39)" stroke-width="0.7"/>
<polygon points="833.2,525.8 870.1,543.6 862.8,590.4 825.9,572" fill="url(#r40)" stroke="url(#r40)" stroke-width="0.7"/>
<polygon points="870.1,543.6 908.9,560.5 901.5,608 862.8,590.4" fill="url(#r41)" stroke="url(#r41)" stroke-width="0.7"/>
<polygon points="908.9,560.5 949.4,576.5 941.9,624.5 901.5,608" fill="url(#r42)" stroke="url(#r42)" stroke-width="0.7"/>
<polygon points="949.4,576.5 991.4,591.3 983.8,639.8 941.9,624.5" fill="url(#r43)" stroke="url(#r43)" stroke-width="0.7"/>
<polygon points="991.4,591.3 1034.7,604.8 1027.1,653.8 983.8,639.8" fill="url(#r44)" stroke="url(#r44)" stroke-width="0.7"/>
<polygon points="1034.7,604.8 1079.2,617 1071.6,666.4 1027.1,653.8" fill="url(#r45)" stroke="url(#r45)" stroke-width="0.7"/>
<polygon points="1079.2,617 1124.7,627.8 1117,677.5 1071.6,666.4" fill="url(#r46)" stroke="url(#r46)" stroke-width="0.7"/>
<polygon points="1124.7,627.8 1170.7,637.2 1163.1,687.3 1117,677.5" fill="url(#r47)" stroke="url(#r47)" stroke-width="0.7"/>
<polygon points="1170.7,637.2 1217.2,645.3 1209.5,695.7 1163.1,687.3" fill="url(#r48)" stroke="url(#r48)" stroke-width="0.7"/>
<polygon points="1217.2,645.3 1263.6,651.9 1256,702.7 1209.5,695.7" fill="url(#r49)" stroke="url(#r49)" stroke-width="0.7"/>
<polygon points="758.1,533.4 791,552.9 783.6,598 751.1,578.1" fill="url(#r50)" stroke="url(#r50)" stroke-width="0.7"/>
<polygon points="791,552.9 825.9,572 818.1,617.5 783.6,598" fill="url(#r51)" stroke="url(#r51)" stroke-width="0.7"/>
<polygon points="825.9,572 862.8,590.4 854.5,636.3 818.1,617.5" fill="url(#r52)" stroke="url(#r52)" stroke-width="0.7"/>
<polygon points="862.8,590.4 901.5,608 892.8,654.3 854.5,636.3" fill="url(#r53)" stroke="url(#r53)" stroke-width="0.7"/>
<polygon points="901.5,608 941.9,624.5 932.7,671.2 892.8,654.3" fill="url(#r54)" stroke="url(#r54)" stroke-width="0.7"/>
<polygon points="941.9,624.5 983.8,639.8 974.2,686.8 932.7,671.2" fill="url(#r55)" stroke="url(#r55)" stroke-width="0.7"/>
<polygon points="983.8,639.8 1027.1,653.8 1017,701.1 974.2,686.8" fill="url(#r56)" stroke="url(#r56)" stroke-width="0.7"/>
<polygon points="1027.1,653.8 1071.6,666.4 1060.9,714 1017,701.1" fill="url(#r57)" stroke="url(#r57)" stroke-width="0.7"/>
<polygon points="1071.6,666.4 1117,677.5 1105.8,725.4 1060.9,714" fill="url(#r58)" stroke="url(#r58)" stroke-width="0.7"/>
<polygon points="1117,677.5 1163.1,687.3 1151.3,735.3 1105.8,725.4" fill="url(#r59)" stroke="url(#r59)" stroke-width="0.7"/>
<polygon points="1163.1,687.3 1209.5,695.7 1197.2,743.8 1151.3,735.3" fill="url(#r60)" stroke="url(#r60)" stroke-width="0.7"/>
<polygon points="1209.5,695.7 1256,702.7 1243.2,751 1197.2,743.8" fill="url(#r61)" stroke="url(#r61)" stroke-width="0.7"/>
<polygon points="1256,702.7 1302.3,708.7 1289,756.9 1243.2,751" fill="url(#r62)" stroke="url(#r62)" stroke-width="0.7"/>
<polygon points="751.1,578.1 783.6,598 776.2,641.6 744.4,621.4" fill="url(#r63)" stroke="url(#r63)" stroke-width="0.7"/>
<polygon points="783.6,598 818.1,617.5 810,661.3 776.2,641.6" fill="url(#r64)" stroke="url(#r64)" stroke-width="0.7"/>
<polygon points="818.1,617.5 854.5,636.3 845.7,680.3 810,661.3" fill="url(#r65)" stroke="url(#r65)" stroke-width="0.7"/>
<polygon points="854.5,636.3 892.8,654.3 883.2,698.4 845.7,680.3" fill="url(#r66)" stroke="url(#r66)" stroke-width="0.7"/>
<polygon points="892.8,654.3 932.7,671.2 922.3,715.5 883.2,698.4" fill="url(#r67)" stroke="url(#r67)" stroke-width="0.7"/>
<polygon points="932.7,671.2 974.2,686.8 962.9,731.3 922.3,715.5" fill="url(#r68)" stroke="url(#r68)" stroke-width="0.7"/>
<polygon points="974.2,686.8 1017,701.1 1004.8,745.8 962.9,731.3" fill="url(#r69)" stroke="url(#r69)" stroke-width="0.7"/>
<polygon points="1017,701.1 1060.9,714 1047.7,758.8 1004.8,745.8" fill="url(#r70)" stroke="url(#r70)" stroke-width="0.7"/>
<polygon points="1060.9,714 1105.8,725.4 1091.6,770.3 1047.7,758.8" fill="url(#r71)" stroke="url(#r71)" stroke-width="0.7"/>
<polygon points="1105.8,725.4 1151.3,735.3 1136.1,780.3 1091.6,770.3" fill="url(#r72)" stroke="url(#r72)" stroke-width="0.7"/>
<polygon points="1151.3,735.3 1197.2,743.8 1181,788.8 1136.1,780.3" fill="url(#r73)" stroke="url(#r73)" stroke-width="0.7"/>
<polygon points="1197.2,743.8 1243.2,751 1226,795.9 1181,788.8" fill="url(#r74)" stroke="url(#r74)" stroke-width="0.7"/>
<polygon points="1243.2,751 1289,756.9 1270.9,801.6 1226,795.9" fill="url(#r75)" stroke="url(#r75)" stroke-width="0.7"/>
<polygon points="744.4,621.4 776.2,641.6 769,682.9 738,662.7" fill="url(#r76)" stroke="url(#r76)" stroke-width="0.7"/>
<polygon points="776.2,641.6 810,661.3 801.9,702.6 769,682.9" fill="url(#r77)" stroke="url(#r77)" stroke-width="0.7"/>
<polygon points="810,661.3 845.7,680.3 836.6,721.6 801.9,702.6" fill="url(#r78)" stroke="url(#r78)" stroke-width="0.7"/>
<polygon points="845.7,680.3 883.2,698.4 873,739.7 836.6,721.6" fill="url(#r79)" stroke="url(#r79)" stroke-width="0.7"/>
<polygon points="883.2,698.4 922.3,715.5 910.9,756.8 873,739.7" fill="url(#r80)" stroke="url(#r80)" stroke-width="0.7"/>
<polygon points="922.3,715.5 962.9,731.3 950.3,772.6 910.9,756.8" fill="url(#r81)" stroke="url(#r81)" stroke-width="0.7"/>
<polygon points="962.9,731.3 1004.8,745.8 991,787.1 950.3,772.6" fill="url(#r82)" stroke="url(#r82)" stroke-width="0.7"/>
<polygon points="1004.8,745.8 1047.7,758.8 1032.6,800.1 991,787.1" fill="url(#r83)" stroke="url(#r83)" stroke-width="0.7"/>
<polygon points="1047.7,758.8 1091.6,770.3 1075.1,811.6 1032.6,800.1" fill="url(#r84)" stroke="url(#r84)" stroke-width="0.7"/>
<polygon points="1091.6,770.3 1136.1,780.3 1118.3,821.6 1075.1,811.6" fill="url(#r85)" stroke="url(#r85)" stroke-width="0.7"/>
<polygon points="1136.1,780.3 1181,788.8 1161.8,830 1118.3,821.6" fill="url(#r86)" stroke="url(#r86)" stroke-width="0.7"/>
<polygon points="1181,788.8 1226,795.9 1205.5,836.8 1161.8,830" fill="url(#r87)" stroke="url(#r87)" stroke-width="0.7"/>
<polygon points="1226,795.9 1270.9,801.6 1249,842.1 1205.5,836.8" fill="url(#r88)" stroke="url(#r88)" stroke-width="0.7"/>
<polygon points="1270.9,801.6 1315.2,806 1292.1,846 1249,842.1" fill="url(#r89)" stroke="url(#r89)" stroke-width="0.7"/>
<polygon points="738,662.7 769,682.9 762,721.4 732.2,701.4" fill="url(#r90)" stroke="url(#r90)" stroke-width="0.7"/>
<polygon points="769,682.9 801.9,702.6 793.8,740.9 762,721.4" fill="url(#r91)" stroke="url(#r91)" stroke-width="0.7"/>
<polygon points="801.9,702.6 836.6,721.6 827.2,759.7 793.8,740.9" fill="url(#r92)" stroke="url(#r92)" stroke-width="0.7"/>
<polygon points="836.6,721.6 873,739.7 862.3,777.6 827.2,759.7" fill="url(#r93)" stroke="url(#r93)" stroke-width="0.7"/>
<polygon points="873,739.7 910.9,756.8 898.9,794.5 862.3,777.6" fill="url(#r94)" stroke="url(#r94)" stroke-width="0.7"/>
<polygon points="910.9,756.8 950.3,772.6 936.9,810.1 898.9,794.5" fill="url(#r95)" stroke="url(#r95)" stroke-width="0.7"/>
<polygon points="950.3,772.6 991,787.1 976,824.4 936.9,810.1" fill="url(#r96)" stroke="url(#r96)" stroke-width="0.7"/>
<polygon points="991,787.1 1032.6,800.1 1016.1,837.3 976,824.4" fill="url(#r97)" stroke="url(#r97)" stroke-width="0.7"/>
<polygon points="1032.6,800.1 1075.1,811.6 1056.9,848.7 1016.1,837.3" fill="url(#r98)" stroke="url(#r98)" stroke-width="0.7"/>
<polygon points="1075.1,811.6 1118.3,821.6 1098.4,858.6 1056.9,848.7" fill="url(#r99)" stroke="url(#r99)" stroke-width="0.7"/>
<polygon points="1118.3,821.6 1161.8,830 1140.3,866.8 1098.4,858.6" fill="url(#r100)" stroke="url(#r100)" stroke-width="0.7"/>
<polygon points="1161.8,830 1205.5,836.8 1182.3,873.4 1140.3,866.8" fill="url(#r101)" stroke="url(#r101)" stroke-width="0.7"/>
<polygon points="1205.5,836.8 1249,842.1 1224.3,878.3 1182.3,873.4" fill="url(#r102)" stroke="url(#r102)" stroke-width="0.7"/>
<polygon points="1249,842.1 1292.1,846 1265.9,881.6 1224.3,878.3" fill="url(#r103)" stroke="url(#r103)" stroke-width="0.7"/>
<polygon points="732.2,701.4 762,721.4 755.5,756.6 726.9,736.8" fill="url(#r104)" stroke="url(#r104)" stroke-width="0.7"/>
<polygon points="762,721.4 793.8,740.9 785.9,775.7 755.5,756.6" fill="url(#r105)" stroke="url(#r105)" stroke-width="0.7"/>
<polygon points="793.8,740.9 827.2,759.7 817.9,794.1 785.9,775.7" fill="url(#r106)" stroke="url(#r106)" stroke-width="0.7"/>
<polygon points="827.2,759.7 862.3,777.6 851.5,811.7 817.9,794.1" fill="url(#r107)" stroke="url(#r107)" stroke-width="0.7"/>
<polygon points="862.3,777.6 898.9,794.5 886.6,828.1 851.5,811.7" fill="url(#r108)" stroke="url(#r108)" stroke-width="0.7"/>
<polygon points="898.9,794.5 936.9,810.1 922.8,843.5 886.6,828.1" fill="url(#r109)" stroke="url(#r109)" stroke-width="0.7"/>
<polygon points="936.9,810.1 976,824.4 960.2,857.5 922.8,843.5" fill="url(#r110)" stroke="url(#r110)" stroke-width="0.7"/>
<polygon points="976,824.4 1016.1,837.3 998.5,870.1 960.2,857.5" fill="url(#r111)" stroke="url(#r111)" stroke-width="0.7"/>
<polygon points="1016.1,837.3 1056.9,848.7 1037.6,881.3 998.5,870.1" fill="url(#r112)" stroke="url(#r112)" stroke-width="0.7"/>
<polygon points="1056.9,848.7 1098.4,858.6 1077.2,890.9 1037.6,881.3" fill="url(#r113)" stroke="url(#r113)" stroke-width="0.7"/>
<polygon points="1098.4,858.6 1140.3,866.8 1117.2,898.9 1077.2,890.9" fill="url(#r114)" stroke="url(#r114)" stroke-width="0.7"/>
<polygon points="1140.3,866.8 1182.3,873.4 1157.4,905.3 1117.2,898.9" fill="url(#r115)" stroke="url(#r115)" stroke-width="0.7"/>
<polygon points="1182.3,873.4 1224.3,878.3 1197.5,909.9 1157.4,905.3" fill="url(#r116)" stroke="url(#r116)" stroke-width="0.7"/>
<polygon points="1224.3,878.3 1265.9,881.6 1237.5,912.8 1197.5,909.9" fill="url(#r117)" stroke="url(#r117)" stroke-width="0.7"/>
<polygon points="1265.9,881.6 1307,883.3 1276.9,913.9 1237.5,912.8" fill="url(#r118)" stroke="url(#r118)" stroke-width="0.7"/>
<polygon points="726.9,736.8 755.5,756.6 749.5,788.1 722.3,768.9" fill="url(#r119)" stroke="url(#r119)" stroke-width="0.7"/>
<polygon points="755.5,756.6 785.9,775.7 778.4,806.7 749.5,788.1" fill="url(#r120)" stroke="url(#r120)" stroke-width="0.7"/>
<polygon points="785.9,775.7 817.9,794.1 808.9,824.6 778.4,806.7" fill="url(#r121)" stroke="url(#r121)" stroke-width="0.7"/>
<polygon points="817.9,794.1 851.5,811.7 840.8,841.6 808.9,824.6" fill="url(#r122)" stroke="url(#r122)" stroke-width="0.7"/>
<polygon points="851.5,811.7 886.6,828.1 874.1,857.6 840.8,841.6" fill="url(#r123)" stroke="url(#r123)" stroke-width="0.7"/>
<polygon points="886.6,828.1 922.8,843.5 908.6,872.4 874.1,857.6" fill="url(#r124)" stroke="url(#r124)" stroke-width="0.7"/>
<polygon points="922.8,843.5 960.2,857.5 944,886 908.6,872.4" fill="url(#r125)" stroke="url(#r125)" stroke-width="0.7"/>
<polygon points="960.2,857.5 998.5,870.1 980.4,898.3 944,886" fill="url(#r126)" stroke="url(#r126)" stroke-width="0.7"/>
<polygon points="998.5,870.1 1037.6,881.3 1017.4,909.1 980.4,898.3" fill="url(#r127)" stroke="url(#r127)" stroke-width="0.7"/>
<polygon points="1037.6,881.3 1077.2,890.9 1055,918.5 1017.4,909.1" fill="url(#r128)" stroke="url(#r128)" stroke-width="0.7"/>
<polygon points="1077.2,890.9 1117.2,898.9 1093,926.2 1055,918.5" fill="url(#r129)" stroke="url(#r129)" stroke-width="0.7"/>
<polygon points="1117.2,898.9 1157.4,905.3 1131.2,932.3 1093,926.2" fill="url(#r130)" stroke="url(#r130)" stroke-width="0.7"/>
<polygon points="1157.4,905.3 1197.5,909.9 1169.4,936.7 1131.2,932.3" fill="url(#r131)" stroke="url(#r131)" stroke-width="0.7"/>
<polygon points="1197.5,909.9 1237.5,912.8 1207.5,939.4 1169.4,936.7" fill="url(#r132)" stroke="url(#r132)" stroke-width="0.7"/>
<polygon points="1237.5,912.8 1276.9,913.9 1245.2,940.3 1207.5,939.4" fill="url(#r133)" stroke="url(#r133)" stroke-width="0.7"/>
<polygon points="1276.9,913.9 1315.7,913.3 1282.4,939.5 1245.2,940.3" fill="url(#r134)" stroke="url(#r134)" stroke-width="0.7"/>
<polygon points="722.3,768.9 749.5,788.1 744,815.9 718.2,797.3" fill="url(#r135)" stroke="url(#r135)" stroke-width="0.7"/>
<polygon points="749.5,788.1 778.4,806.7 771.3,833.9 744,815.9" fill="url(#r136)" stroke="url(#r136)" stroke-width="0.7"/>
<polygon points="778.4,806.7 808.9,824.6 800.2,851.1 771.3,833.9" fill="url(#r137)" stroke="url(#r137)" stroke-width="0.7"/>
<polygon points="808.9,824.6 840.8,841.6 830.4,867.4 800.2,851.1" fill="url(#r138)" stroke="url(#r138)" stroke-width="0.7"/>
<polygon points="840.8,841.6 874.1,857.6 861.8,882.7 830.4,867.4" fill="url(#r139)" stroke="url(#r139)" stroke-width="0.7"/>
<polygon points="874.1,857.6 908.6,872.4 894.3,897 861.8,882.7" fill="url(#r140)" stroke="url(#r140)" stroke-width="0.7"/>
<polygon points="908.6,872.4 944,886 927.8,910.1 894.3,897" fill="url(#r141)" stroke="url(#r141)" stroke-width="0.7"/>
<polygon points="944,886 980.4,898.3 962,921.9 927.8,910.1" fill="url(#r142)" stroke="url(#r142)" stroke-width="0.7"/>
<polygon points="980.4,898.3 1017.4,909.1 996.9,932.3 962,921.9" fill="url(#r143)" stroke="url(#r143)" stroke-width="0.7"/>
<polygon points="1017.4,909.1 1055,918.5 1032.4,941.3 996.9,932.3" fill="url(#r144)" stroke="url(#r144)" stroke-width="0.7"/>
<polygon points="1055,918.5 1093,926.2 1068.2,948.7 1032.4,941.3" fill="url(#r145)" stroke="url(#r145)" stroke-width="0.7"/>
<polygon points="1093,926.2 1131.2,932.3 1104.2,954.6 1068.2,948.7" fill="url(#r146)" stroke="url(#r146)" stroke-width="0.7"/>
<polygon points="1131.2,932.3 1169.4,936.7 1140.4,958.9 1104.2,954.6" fill="url(#r147)" stroke="url(#r147)" stroke-width="0.7"/>
<polygon points="1169.4,936.7 1207.5,939.4 1176.5,961.6 1140.4,958.9" fill="url(#r148)" stroke="url(#r148)" stroke-width="0.7"/>
<polygon points="1207.5,939.4 1245.2,940.3 1212.5,962.6 1176.5,961.6" fill="url(#r149)" stroke="url(#r149)" stroke-width="0.7"/>
<polygon points="1245.2,940.3 1282.4,939.5 1248.1,962.1 1212.5,962.6" fill="url(#r150)" stroke="url(#r150)" stroke-width="0.7"/>
<polygon points="1282.4,939.5 1318.6,936.9 1282.2,961.1 1248.1,962.1" fill="url(#r151)" stroke="url(#r151)" stroke-width="0.7"/>
<polygon points="718.2,797.3 744,815.9 739.1,840 714.8,822.2" fill="url(#r152)" stroke="url(#r152)" stroke-width="0.7"/>
<polygon points="744,815.9 771.3,833.9 764.9,857.1 739.1,840" fill="url(#r153)" stroke="url(#r153)" stroke-width="0.7"/>
<polygon points="771.3,833.9 800.2,851.1 792.1,873.5 764.9,857.1" fill="url(#r154)" stroke="url(#r154)" stroke-width="0.7"/>
<polygon points="800.2,851.1 830.4,867.4 820.4,889.1 792.1,873.5" fill="url(#r155)" stroke="url(#r155)" stroke-width="0.7"/>
<polygon points="830.4,867.4 861.8,882.7 849.9,903.7 820.4,889.1" fill="url(#r156)" stroke="url(#r156)" stroke-width="0.7"/>
<polygon points="861.8,882.7 894.3,897 880.4,917.3 849.9,903.7" fill="url(#r157)" stroke="url(#r157)" stroke-width="0.7"/>
<polygon points="894.3,897 927.8,910.1 911.7,929.7 880.4,917.3" fill="url(#r158)" stroke="url(#r158)" stroke-width="0.7"/>
<polygon points="927.8,910.1 962,921.9 943.8,941 911.7,929.7" fill="url(#r159)" stroke="url(#r159)" stroke-width="0.7"/>
<polygon points="962,921.9 996.9,932.3 976.5,950.9 943.8,941" fill="url(#r160)" stroke="url(#r160)" stroke-width="0.7"/>
<polygon points="996.9,932.3 1032.4,941.3 1009.7,959.5 976.5,950.9" fill="url(#r161)" stroke="url(#r161)" stroke-width="0.7"/>
<polygon points="1032.4,941.3 1068.2,948.7 1043.2,966.6 1009.7,959.5" fill="url(#r162)" stroke="url(#r162)" stroke-width="0.7"/>
<polygon points="1068.2,948.7 1104.2,954.6 1077.1,972.5 1043.2,966.6" fill="url(#r163)" stroke="url(#r163)" stroke-width="0.7"/>
<polygon points="1104.2,954.6 1140.4,958.9 1111.1,977.8 1077.1,972.5" fill="url(#r164)" stroke="url(#r164)" stroke-width="0.7"/>
<polygon points="1140.4,958.9 1176.5,961.6 1145.4,981.2 1111.1,977.8" fill="url(#r165)" stroke="url(#r165)" stroke-width="0.7"/>
<polygon points="1176.5,961.6 1212.5,962.6 1179.4,981.9 1145.4,981.2" fill="url(#r166)" stroke="url(#r166)" stroke-width="0.7"/>
<polygon points="1212.5,962.6 1248.1,962.1 1213.1,980.7 1179.4,981.9" fill="url(#r167)" stroke="url(#r167)" stroke-width="0.7"/>
<polygon points="1248.1,962.1 1282.2,961.1 1246.5,978.1 1213.1,980.7" fill="url(#r168)" stroke="url(#r168)" stroke-width="0.7"/>
<polygon points="1282.2,961.1 1314,956.9 1278.3,975.4 1246.5,978.1" fill="url(#r169)" stroke="url(#r169)" stroke-width="0.7"/>
<polygon points="714.8,822.2 739.1,840 735,860.5 712,843.6" fill="url(#r170)" stroke="url(#r170)" stroke-width="0.7"/>
<polygon points="739.1,840 764.9,857.1 759.2,876.7 735,860.5" fill="url(#r171)" stroke="url(#r171)" stroke-width="0.7"/>
<polygon points="764.9,857.1 792.1,873.5 784.6,892.2 759.2,876.7" fill="url(#r172)" stroke="url(#r172)" stroke-width="0.7"/>
<polygon points="792.1,873.5 820.4,889.1 811.1,907 784.6,892.2" fill="url(#r173)" stroke="url(#r173)" stroke-width="0.7"/>
<polygon points="820.4,889.1 849.9,903.7 838.6,920.8 811.1,907" fill="url(#r174)" stroke="url(#r174)" stroke-width="0.7"/>
<polygon points="849.9,903.7 880.4,917.3 867,933.6 838.6,920.8" fill="url(#r175)" stroke="url(#r175)" stroke-width="0.7"/>
<polygon points="880.4,917.3 911.7,929.7 896.1,945.4 867,933.6" fill="url(#r176)" stroke="url(#r176)" stroke-width="0.7"/>
<polygon points="911.7,929.7 943.8,941 925.9,956 896.1,945.4" fill="url(#r177)" stroke="url(#r177)" stroke-width="0.7"/>
<polygon points="943.8,941 976.5,950.9 956.3,965.5 925.9,956" fill="url(#r178)" stroke="url(#r178)" stroke-width="0.7"/>
<polygon points="976.5,950.9 1009.7,959.5 987.2,973.6 956.3,965.5" fill="url(#r179)" stroke="url(#r179)" stroke-width="0.7"/>
<polygon points="1009.7,959.5 1043.2,966.6 1018.4,980.3 987.2,973.6" fill="url(#r180)" stroke="url(#r180)" stroke-width="0.7"/>
<polygon points="1043.2,966.6 1077.1,972.5 1049.9,985.7 1018.4,980.3" fill="url(#r181)" stroke="url(#r181)" stroke-width="0.7"/>
<polygon points="1077.1,972.5 1111.1,977.8 1081.6,992.6 1049.9,985.7" fill="url(#r182)" stroke="url(#r182)" stroke-width="0.7"/>
<polygon points="1111.1,977.8 1145.4,981.2 1113.8,997.3 1081.6,992.6" fill="url(#r183)" stroke="url(#r183)" stroke-width="0.7"/>
<polygon points="1145.4,981.2 1179.4,981.9 1145.9,997.2 1113.8,997.3" fill="url(#r184)" stroke="url(#r184)" stroke-width="0.7"/>
<polygon points="1179.4,981.9 1213.1,980.7 1177.5,994.4 1145.9,997.2" fill="url(#r185)" stroke="url(#r185)" stroke-width="0.7"/>
<polygon points="1213.1,980.7 1246.5,978.1 1208.7,990.1 1177.5,994.4" fill="url(#r186)" stroke="url(#r186)" stroke-width="0.7"/>
<polygon points="1246.5,978.1 1278.3,975.4 1228.9,986.5 1208.7,990.1" fill="url(#r187)" stroke="url(#r187)" stroke-width="0.7"/>
<polygon points="1278.3,975.4 1306,970.3 1228.9,986.5 1228.9,986.5" fill="url(#r188)" stroke="url(#r188)" stroke-width="0.7"/>
<polygon points="1306,970.3 1342.8,957.1 1228.9,986.5 1228.9,986.5" fill="url(#r189)" stroke="url(#r189)" stroke-width="0.7"/>
<polygon points="1342.8,957.1 1374.2,946.8 1228.9,986.5 1228.9,986.5" fill="url(#r190)" stroke="url(#r190)" stroke-width="0.7"/>
<polygon points="1374.2,946.8 1404.3,934.8 1228.9,986.5 1228.9,986.5" fill="url(#r191)" stroke="url(#r191)" stroke-width="0.7"/>
<polygon points="712,843.6 735,860.5 731.5,877.8 709.7,861.8" fill="url(#r192)" stroke="url(#r192)" stroke-width="0.7"/>
<polygon points="735,860.5 759.2,876.7 754.3,893.1 731.5,877.8" fill="url(#r193)" stroke="url(#r193)" stroke-width="0.7"/>
<polygon points="759.2,876.7 784.6,892.2 778,907.6 754.3,893.1" fill="url(#r194)" stroke="url(#r194)" stroke-width="0.7"/>
<polygon points="784.6,892.2 811.1,907 802.7,921.4 778,907.6" fill="url(#r195)" stroke="url(#r195)" stroke-width="0.7"/>
<polygon points="811.1,907 838.6,920.8 828.1,934.3 802.7,921.4" fill="url(#r196)" stroke="url(#r196)" stroke-width="0.7"/>
<polygon points="838.6,920.8 867,933.6 854.4,946.4 828.1,934.3" fill="url(#r197)" stroke="url(#r197)" stroke-width="0.7"/>
<polygon points="867,933.6 896.1,945.4 881.3,957.5 854.4,946.4" fill="url(#r198)" stroke="url(#r198)" stroke-width="0.7"/>
<polygon points="896.1,945.4 925.9,956 908.8,967.6 881.3,957.5" fill="url(#r199)" stroke="url(#r199)" stroke-width="0.7"/>
<polygon points="925.9,956 956.3,965.5 936.8,976.5 908.8,967.6" fill="url(#r200)" stroke="url(#r200)" stroke-width="0.7"/>
<polygon points="956.3,965.5 987.2,973.6 965.2,984.2 936.8,976.5" fill="url(#r201)" stroke="url(#r201)" stroke-width="0.7"/>
<polygon points="987.2,973.6 1018.4,980.3 994,990.4 965.2,984.2" fill="url(#r202)" stroke="url(#r202)" stroke-width="0.7"/>
<polygon points="1018.4,980.3 1049.9,985.7 1023.1,995.2 994,990.4" fill="url(#r203)" stroke="url(#r203)" stroke-width="0.7"/>
<polygon points="1049.9,985.7 1081.6,992.6 1052.4,998.7 1023.1,995.2" fill="url(#r204)" stroke="url(#r204)" stroke-width="0.7"/>
<polygon points="1081.6,992.6 1113.8,997.3 1081.7,1004.1 1052.4,998.7" fill="url(#r205)" stroke="url(#r205)" stroke-width="0.7"/>
<polygon points="1113.8,997.3 1145.9,997.2 1111.4,1004.7 1081.7,1004.1" fill="url(#r206)" stroke="url(#r206)" stroke-width="0.7"/>
<polygon points="1145.9,997.2 1177.5,994.4 1124.8,1003.8 1111.4,1004.7" fill="url(#r207)" stroke="url(#r207)" stroke-width="0.7"/>
<polygon points="1177.5,994.4 1208.7,990.1 1124.8,1003.8 1124.8,1003.8" fill="url(#r208)" stroke="url(#r208)" stroke-width="0.7"/>
<polygon points="1208.7,990.1 1228.9,986.5 1124.8,1003.8 1124.8,1003.8" fill="url(#r209)" stroke="url(#r209)" stroke-width="0.7"/>
<polygon points="709.7,861.8 731.5,877.8 729.6,887.5 708.5,872.1" fill="url(#r210)" stroke="url(#r210)" stroke-width="0.7"/>
<polygon points="731.5,877.8 754.3,893.1 751.5,902.1 729.6,887.5" fill="url(#r211)" stroke="url(#r211)" stroke-width="0.7"/>
<polygon points="754.3,893.1 778,907.6 774.2,916 751.5,902.1" fill="url(#r212)" stroke="url(#r212)" stroke-width="0.7"/>
<polygon points="778,907.6 802.7,921.4 797.7,929.1 774.2,916" fill="url(#r213)" stroke="url(#r213)" stroke-width="0.7"/>
<polygon points="802.7,921.4 828.1,934.3 821.9,941.5 797.7,929.1" fill="url(#r214)" stroke="url(#r214)" stroke-width="0.7"/>
<polygon points="828.1,934.3 854.4,946.4 846.7,953.1 821.9,941.5" fill="url(#r215)" stroke="url(#r215)" stroke-width="0.7"/>
<polygon points="854.4,946.4 881.3,957.5 872.2,963.7 846.7,953.1" fill="url(#r216)" stroke="url(#r216)" stroke-width="0.7"/>
<polygon points="881.3,957.5 908.8,967.6 898.2,973.5 872.2,963.7" fill="url(#r217)" stroke="url(#r217)" stroke-width="0.7"/>
<polygon points="908.8,967.6 936.8,976.5 924.7,982.1 898.2,973.5" fill="url(#r218)" stroke="url(#r218)" stroke-width="0.7"/>
<polygon points="936.8,976.5 965.2,984.2 951.5,989.4 924.7,982.1" fill="url(#r219)" stroke="url(#r219)" stroke-width="0.7"/>
<polygon points="965.2,984.2 994,990.4 978.7,995.4 951.5,989.4" fill="url(#r220)" stroke="url(#r220)" stroke-width="0.7"/>
<polygon points="994,990.4 1023.1,995.2 1006.2,999.7 978.7,995.4" fill="url(#r221)" stroke="url(#r221)" stroke-width="0.7"/>
<polygon points="1023.1,995.2 1052.4,998.7 1033.8,1002.2 1006.2,999.7" fill="url(#r222)" stroke="url(#r222)" stroke-width="0.7"/>
<polygon points="1052.4,998.7 1081.7,1004.1 1061.4,1003.7 1033.8,1002.2" fill="url(#r223)" stroke="url(#r223)" stroke-width="0.7"/>
<polygon points="1081.7,1004.1 1111.4,1004.7 1073.8,1005.3 1061.4,1003.7" fill="url(#r224)" stroke="url(#r224)" stroke-width="0.7"/>
<polygon points="1111.4,1004.7 1124.8,1003.8 1073.8,1005.3 1073.8,1005.3" fill="url(#r225)" stroke="url(#r225)" stroke-width="0.7"/>
<path d="M1075.1 1005.5L1084.1 1005.8L1090.3 1005.6L1099.5 1005.4L1108.8 1005L1115.3 1004.6L1124.8 1003.8L1134.3 1002.8L1143.9 1001.5L1153.6 1000L1163.2 998.4L1173 996.7L1182.8 995L1195.7 992.6L1205.7 990.9L1215.7 989L1228.9 986.5L1239.1 984.6L1252.5 982.2" fill="none" stroke="url(#fg)" stroke-opacity="0.17" stroke-width="20" stroke-linejoin="round"/>
<path d="M1075.1 1005.5L1084.1 1005.8L1090.3 1005.6L1099.5 1005.4L1108.8 1005L1115.3 1004.6L1124.8 1003.8L1134.3 1002.8L1143.9 1001.5L1153.6 1000L1163.2 998.4L1173 996.7L1182.8 995L1195.7 992.6L1205.7 990.9L1215.7 989L1228.9 986.5L1239.1 984.6L1252.5 982.2" fill="none" stroke="url(#fg)" stroke-opacity="0.22" stroke-width="10" stroke-linejoin="round"/>
<path d="M626.4 304L777.1 415.6L809.4 433.5L843.7 450.5L879.8 466.7L917.7 482.1L957.2 496.6L998.1 510.1L1040.3 522.7L1083.5 534.1L1127.5 544.1L1172.1 552.7L1216.9 559.6L1261.5 564.5L1305.7 567.1M620.4 329.7L772.5 444L805.1 462.3L839.8 480L876.4 496.9L914.8 513L954.8 528.1L996.4 542.2L1039.2 555.2L1083.2 566.9L1128 577.3L1173.4 586.2L1219.2 593.7L1264.8 599.5L1310.1 603.6M611.7 368.1L765.3 488.4L798.2 507.3L833.2 525.8L870.1 543.6L908.9 560.5L949.4 576.5L991.4 591.3L1034.7 604.8L1079.2 617L1124.7 627.8L1170.7 637.2L1217.2 645.3L1263.6 651.9L1309.8 657.3M604.8 409.1L758.1 533.4L791 552.9L825.9 572L862.8 590.4L901.5 608L941.9 624.5L983.8 639.8L1027.1 653.8L1071.6 666.4L1117 677.5L1163.1 687.3L1209.5 695.7L1256 702.7L1302.3 708.7M599.5 450.2L751.1 578.1L783.6 598L818.1 617.5L854.5 636.3L892.8 654.3L932.7 671.2L974.2 686.8L1017 701.1L1060.9 714L1105.8 725.4L1151.3 735.3L1197.2 743.8L1243.2 751L1289 756.9M596 492L744.4 621.4L776.2 641.6L810 661.3L845.7 680.3L883.2 698.4L922.3 715.5L962.9 731.3L1004.8 745.8L1047.7 758.8L1091.6 770.3L1136.1 780.3L1181 788.8L1226 795.9L1270.9 801.6L1315.2 806M593.7 532.6L738 662.7L769 682.9L801.9 702.6L836.6 721.6L873 739.7L910.9 756.8L950.3 772.6L991 787.1L1032.6 800.1L1075.1 811.6L1118.3 821.6L1161.8 830L1205.5 836.8L1249 842.1L1292.1 846M593.1 571.9L732.2 701.4L762 721.4L793.8 740.9L827.2 759.7L862.3 777.6L898.9 794.5L936.9 810.1L976 824.4L1016.1 837.3L1056.9 848.7L1098.4 858.6L1140.3 866.8L1182.3 873.4L1224.3 878.3L1265.9 881.6L1307 883.3M593.7 609.1L726.9 736.8L755.5 756.6L785.9 775.7L817.9 794.1L851.5 811.7L886.6 828.1L922.8 843.5L960.2 857.5L998.5 870.1L1037.6 881.3L1077.2 890.9L1117.2 898.9L1157.4 905.3L1197.5 909.9L1237.5 912.8L1276.9 913.9L1315.7 913.3M594.7 644.6L722.3 768.9L749.5 788.1L778.4 806.7L808.9 824.6L840.8 841.6L874.1 857.6L908.6 872.4L944 886L980.4 898.3L1017.4 909.1L1055 918.5L1093 926.2L1131.2 932.3L1169.4 936.7L1207.5 939.4L1245.2 940.3L1282.4 939.5L1318.6 936.9M596.7 676L718.2 797.3L744 815.9L771.3 833.9L800.2 851.1L830.4 867.4L861.8 882.7L894.3 897L927.8 910.1L962 921.9L996.9 932.3L1032.4 941.3L1068.2 948.7L1104.2 954.6L1140.4 958.9L1176.5 961.6L1212.5 962.6L1248.1 962.1L1282.2 961.1L1314 956.9M600.5 706.3L714.8 822.2L739.1 840L764.9 857.1L792.1 873.5L820.4 889.1L849.9 903.7L880.4 917.3L911.7 929.7L943.8 941L976.5 950.9L1009.7 959.5L1043.2 966.6L1077.1 972.5L1111.1 977.8L1145.4 981.2L1179.4 981.9L1213.1 980.7L1246.5 978.1L1278.3 975.4L1306 970.3M604.5 733.2L712 843.6L735 860.5L759.2 876.7L784.6 892.2L811.1 907L838.6 920.8L867 933.6L896.1 945.4L925.9 956L956.3 965.5L987.2 973.6L1018.4 980.3L1049.9 985.7L1081.6 992.6L1113.8 997.3L1145.9 997.2L1177.5 994.4L1208.7 990.1L1228.9 986.5M608.8 757L709.7 861.8L731.5 877.8L754.3 893.1L778 907.6L802.7 921.4L828.1 934.3L854.4 946.4L881.3 957.5L908.8 967.6L936.8 976.5L965.2 984.2L994 990.4L1023.1 995.2L1052.4 998.7L1081.7 1004.1L1111.4 1004.7L1124.8 1003.8M612.3 771.8L708.5 872.1L729.6 887.5L751.5 902.1L774.2 916L797.7 929.1L821.9 941.5L846.7 953.1L872.2 963.7L898.2 973.5L924.7 982.1L951.5 989.4L978.7 995.4L1006.2 999.7L1033.8 1002.2L1061.4 1003.7L1073.8 1005.3M777.1 415.6L772.5 444L765.3 488.4L758.1 533.4L751.1 578.1L744.4 621.4L738 662.7L732.2 701.4L726.9 736.8L722.3 768.9L718.2 797.3L714.8 822.2L712 843.6L709.7 861.8L708.5 872.1M809.4 433.5L805.1 462.3L798.2 507.3L791 552.9L783.6 598L776.2 641.6L769 682.9L762 721.4L755.5 756.6L749.5 788.1L744 815.9L739.1 840L735 860.5L731.5 877.8L729.6 887.5M843.7 450.5L839.8 480L833.2 525.8L825.9 572L818.1 617.5L810 661.3L801.9 702.6L793.8 740.9L785.9 775.7L778.4 806.7L771.3 833.9L764.9 857.1L759.2 876.7L754.3 893.1L751.5 902.1M879.8 466.7L876.4 496.9L870.1 543.6L862.8 590.4L854.5 636.3L845.7 680.3L836.6 721.6L827.2 759.7L817.9 794.1L808.9 824.6L800.2 851.1L792.1 873.5L784.6 892.2L778 907.6L774.2 916M917.7 482.1L914.8 513L908.9 560.5L901.5 608L892.8 654.3L883.2 698.4L873 739.7L862.3 777.6L851.5 811.7L840.8 841.6L830.4 867.4L820.4 889.1L811.1 907L802.7 921.4L797.7 929.1M957.2 496.6L954.8 528.1L949.4 576.5L941.9 624.5L932.7 671.2L922.3 715.5L910.9 756.8L898.9 794.5L886.6 828.1L874.1 857.6L861.8 882.7L849.9 903.7L838.6 920.8L828.1 934.3L821.9 941.5M998.1 510.1L996.4 542.2L991.4 591.3L983.8 639.8L974.2 686.8L962.9 731.3L950.3 772.6L936.9 810.1L922.8 843.5L908.6 872.4L894.3 897L880.4 917.3L867 933.6L854.4 946.4L846.7 953.1M1040.3 522.7L1039.2 555.2L1034.7 604.8L1027.1 653.8L1017 701.1L1004.8 745.8L991 787.1L976 824.4L960.2 857.5L944 886L927.8 910.1L911.7 929.7L896.1 945.4L881.3 957.5L872.2 963.7M1083.5 534.1L1083.2 566.9L1079.2 617L1071.6 666.4L1060.9 714L1047.7 758.8L1032.6 800.1L1016.1 837.3L998.5 870.1L980.4 898.3L962 921.9L943.8 941L925.9 956L908.8 967.6L898.2 973.5M1127.5 544.1L1128 577.3L1124.7 627.8L1117 677.5L1105.8 725.4L1091.6 770.3L1075.1 811.6L1056.9 848.7L1037.6 881.3L1017.4 909.1L996.9 932.3L976.5 950.9L956.3 965.5L936.8 976.5L924.7 982.1M1172.1 552.7L1173.4 586.2L1170.7 637.2L1163.1 687.3L1151.3 735.3L1136.1 780.3L1118.3 821.6L1098.4 858.6L1077.2 890.9L1055 918.5L1032.4 941.3L1009.7 959.5L987.2 973.6L965.2 984.2L951.5 989.4M1216.9 559.6L1219.2 593.7L1217.2 645.3L1209.5 695.7L1197.2 743.8L1181 788.8L1161.8 830L1140.3 866.8L1117.2 898.9L1093 926.2L1068.2 948.7L1043.2 966.6L1018.4 980.3L994 990.4L978.7 995.4M1261.5 564.5L1264.8 599.5L1263.6 651.9L1256 702.7L1243.2 751L1226 795.9L1205.5 836.8L1182.3 873.4L1157.4 905.3L1131.2 932.3L1104.2 954.6L1077.1 972.5L1049.9 985.7L1023.1 995.2L1006.2 999.7M1305.7 567.1L1310.1 603.6L1309.8 657.3L1302.3 708.7L1289 756.9L1270.9 801.6L1249 842.1L1224.3 878.3L1197.5 909.9L1169.4 936.7L1140.4 958.9L1111.1 977.8L1081.6 992.6L1052.4 998.7L1033.8 1002.2M1349.1 567.3L1354.6 605.8L1355.2 661.5L1348 713.6L1334.2 761.8L1315.2 806L1292.1 846L1265.9 881.6L1237.5 912.8L1207.5 939.4L1176.5 961.6L1145.4 981.2L1113.8 997.3L1081.7 1004.1L1061.4 1003.7M1391.2 564.5L1397.9 606.2L1399.6 664.6L1392.7 717.7L1378.6 765.8L1358.8 809.4L1334.6 848.5L1307 883.3L1276.9 913.9L1245.2 940.3L1212.5 962.6L1179.4 981.9L1145.9 997.2L1111.4 1004.7L1109 1004.9L1106.6 1005.1L1104.2 1005.2L1101.8 1005.3M1431.6 558.6L1439.7 604.6L1442.5 666.7L1436 721.2L1421.7 769.2L1401.2 811.8L1376 849.7L1347.2 883.5L1315.7 913.3L1282.4 939.5L1248.1 962.1L1213.1 980.7L1177.5 994.4L1170.9 996.2L1164.4 997.8L1157.8 999.2L1151.2 1000.4M1469.9 549L1479.3 600.8L1483.5 668.1L1477.4 724.4L1463 772.2L1442.1 813.5L1416.1 849.8L1386.2 882.1L1353.6 911L1318.6 936.9L1282.2 961.1L1246.5 978.1L1208.7 990.1L1206.1 990.7L1203.5 991.2L1200.8 991.7L1198.2 992.2M1505.4 535.3L1516.4 594.9L1522 668.9L1516.6 727.7L1502.3 775.2L1481.1 814.8L1454.5 848.9L1423.8 879.3L1390.3 907L1354.7 932.1L1314 956.9L1278.3 975.4L1270.7 977.7L1262.6 979.7L1254.3 981.7L1245.8 983.4" stroke="#0a0a0a" stroke-opacity="0.88" stroke-width="0.82" fill="none" stroke-linejoin="round"/>
</g>
<path d="M626.4 304L777.1 415.6L793 424.7L809.4 433.5L826.3 442.1L843.7 450.5L861.5 458.7L879.8 466.7L898.5 474.5L917.7 482.1L937.2 489.4L957.2 496.6L977.4 503.5L998.1 510.1L1019 516.5L1040.3 522.7L1061.8 528.5L1083.5 534.1L1105.4 539.3L1127.5 544.1L1149.7 548.6L1172.1 552.7L1194.5 556.4L1216.9 559.6L1239.2 562.3" stroke="#0a0a0a" stroke-opacity="0.88" stroke-width="0.82" fill="none" stroke-linejoin="round"/>
<path d="M612.3 771.8L717.9 879.1L728.6 886.7L739.4 894.1L750.4 901.4L761.7 908.4L773.1 915.3L784.7 922L796.5 928.5L808.5 934.8L820.7 940.9L833 946.8L845.5 952.5L858.1 958L870.9 963.2L883.8 968.2L896.9 973L910 977.5L923.3 981.7L936.7 985.5L950.2 989.1L963.7 992.3L977.4 995.1L991.1 997.5L1004.8 999.5L1018.6 1001L1032.4 1002.1L1046.2 1002.7L1060 1003.5L1073.8 1005.3L1075.1 1005.5L1084.1 1005.8L1090.3 1005.6L1099.5 1005.4L1108.8 1005L1115.3 1004.6L1124.8 1003.8L1134.3 1002.8L1143.9 1001.5L1153.6 1000L1163.2 998.4L1173 996.7L1182.8 995L1195.7 992.6L1205.7 990.9L1215.7 989L1228.9 986.5L1239.1 984.6L1252.5 982.2" stroke="#0a0a0a" stroke-opacity="0.88" stroke-width="0.82" fill="none" stroke-linejoin="round"/>
</g>
<g clip-path="url(#cz)"><path d="M1401.2 -204.6L1448.7 -195.3M-164.1 -200.5L-206.1 -187.9M1343.3 -201.6L1463.2 -177.5M-98.2 -203.5L-202.5 -171.3M1262.1 -203.2L1453 -164.1M-52.2 -200.4L-221.3 -146.6M1203.4 -200.2L1442.5 -150.1M13.1 -203.4L-217.8 -127.8M1122.3 -201.9L1457.8 -129.8M59.6 -200.2L-214.2 -108M1041.6 -203.5L1446.8 -114.3M124.4 -203.2L-210.3 -87.1M981.7 -200.5L1463.1 -91.8M171.3 -200.1L-206.3 -65M901 -202.2L1451.6 -74.6M235.5 -203.1L-201.9 -41.5M820.7 -203.8L1469 -49.6M299.1 -206.1L-224.5 -6.3M759.7 -200.8L1456.9 -30.3M346.6 -202.9L-220.5 20.9M679.5 -202.5L1444.3 -10.1M409.6 -205.9L-216.1 49.9M599.6 -204.1L1462.9 19.3M457.6 -202.8L-211.5 80.9M537.4 -201.1L1449.7 42.1M520.1 -205.8L-206.5 114.1M457.6 -202.8L1469.7 75.4M568.6 -202.6L-201.2 149.7M378.2 -204.4L1455.7 101.3M630.5 -205.6L-229.4 204.3M314.9 -201.4L1441 128.7M679.5 -202.5L-224.4 247M235.5 -203.1L1462.7 169M740.8 -205.5L-219.1 293.4M171.3 -200.1L1447.1 200.5M790.3 -202.3L-213.3 343.9M92.1 -201.7L1470.7 247.1M851 -205.3L-206.9 399.1M13.1 -203.4L1454.1 283.8M901 -202.2L-243 485.6M-52.2 -200.4L1480.1 338.3M961.2 -205.2L-237.4 555M-131.1 -202L1462.4 381.5M1011.7 -202L-231.2 632M-209.6 -203.7L1443.3 427.9M1071.3 -205L-224.3 718M-202.5 -171.3L1472.2 497.7M1122.3 -201.9L-216.5 814.7M-208.1 -141.1L1451.7 553.6M1181.3 -204.9L-207.6 924M-200.2 -101.9L1484.1 638.4M1232.8 -201.7L-260.6 1103.7M-213 -24.3L1498.9 812M1343.3 -201.6L-245.3 1434.1M-204 29.4L1474.6 897.9M1401.2 -204.6L-83.1 1472.9M-211.5 80.9L1447.7 993.3M1443.7 -188.9L148.6 1432.8M-201.2 149.7L1490.9 1142.6M1441.1 -106.3L317.2 1471.5M-209.5 216.7L1461.1 1267.6M1444.3 -10.1L541.6 1431.5M-219.1 293.4L1512.6 1467.3M1441 128.7L716.6 1470.1M-206.9 399.1L1220.9 1448.6M1445.4 303L933.7 1430.2M-218 505.6L933.7 1430.2M1440.8 583.3L1115 1468.7M-203.2 656.8L716.6 1470.1M1447.7 993.3L1324.9 1428.9M-216.5 814.7L430.4 1451.3M-232.8 1009.5L148.6 1432.8M-214 1306.4L-128.9 1414.6" fill="none" stroke="#4a4a4a" stroke-width="1.5" stroke-opacity="0.21"/></g>
<line x1="452.3" y1="589.3" x2="382.6" y2="654.5" stroke="#6a9023" stroke-width="2"/>
<path d="M626.4 304L620.4 329.7L611.7 368.1L604.8 409.1L599.5 450.2L596 492L593.7 532.6L593.1 571.9L593.7 609.1L594.7 644.6L596.7 676L600.5 706.3L604.5 733.2L608.8 757L612.3 771.8" fill="none" stroke="#efbf22" stroke-width="1.35" stroke-linejoin="round"/>
<path d="M604.8 409.1L599.5 450.2" fill="none" stroke="#ffffff" stroke-width="1.5"/>
<g id="cursor" fill="none">
<line x1="701.7" y1="332.2" x2="700.4" y2="348.8" stroke="#000" stroke-width="1.2"/>
<line x1="699.6" y1="360.4" x2="698.4" y2="376.5" stroke="#000" stroke-width="1.2"/>
<line x1="695.7" y1="358.4" x2="684.1" y2="369.8" stroke="#000" stroke-width="1.2"/>
<line x1="675.7" y1="343.6" x2="684.9" y2="347.5" stroke="#000" stroke-width="1.2"/>
<line x1="695.2" y1="352.1" x2="678" y2="344.2" stroke="#2a0d12" stroke-width="1.3" stroke-dasharray="1.6 1.6" stroke-opacity="0.85"/>
<line x1="704.9" y1="356.6" x2="725.3" y2="366" stroke="#2a0d12" stroke-width="1.3" stroke-dasharray="1.6 1.6" stroke-opacity="0.85"/>
<line x1="703.2" y1="351.4" x2="717.9" y2="337.5" stroke="#14200a" stroke-width="1.3" stroke-dasharray="1.6 1.6" stroke-opacity="0.85"/>
<circle cx="699.7" cy="354.3" r="14.6" stroke="#ffffff" stroke-width="1.7"/>
<circle cx="699.7" cy="354.3" r="14.6" stroke="#ff2020" stroke-width="1.7" stroke-dasharray="5.733 5.733" transform="rotate(-93 699.7 354.3)"/>
<circle cx="699.95" cy="354.6" r="2.4" fill="#ffa42a" stroke="#1a1a1a" stroke-width="0.6"/>
</g>
<path d="M1172 0H1240V61H1176a4 4 0 0 1-4-4Z" fill="#3b3b3b" fill-opacity="0.94"/>
<rect x="1185" y="-9" width="80" height="26.3" rx="4" fill="#2e2e2e"/><rect x="1185" y="21" width="80" height="28.4" rx="4" fill="#2e2e2e"/>
<rect x="1185" y="-10" width="80" height="26.3" rx="4" fill="#545454"/>
<rect x="1185" y="20" width="80" height="28.4" rx="4" fill="#545454"/>
<g font-family="DejaVu Sans, Liberation Sans, sans-serif" font-size="17" fill="#e6e6e6" style="will-change:transform;transform:translateZ(0)"><text x="1207.6" y="10">Mea</text><text x="1207.6" y="40">Mea</text></g>
</svg></body></html>
